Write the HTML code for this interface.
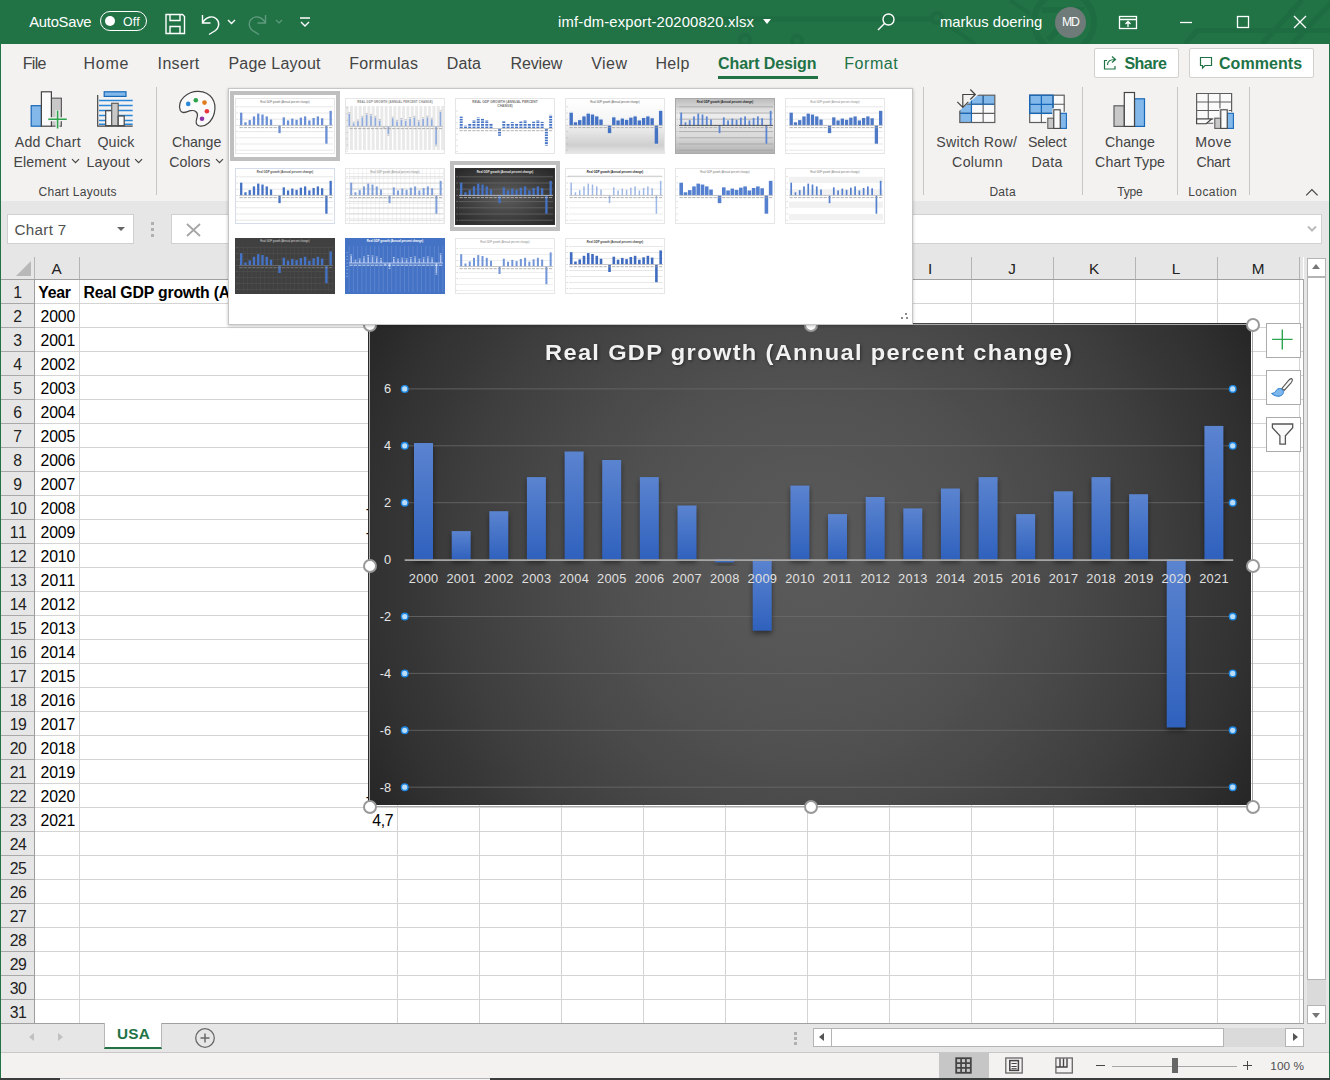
<!DOCTYPE html><html lang="en"><head><meta charset="utf-8"><title>imf-dm-export-20200820.xlsx - Excel</title><style>
*{box-sizing:border-box;margin:0;padding:0}
html,body{width:1330px;height:1080px;overflow:hidden;background:#fff}
body{font-family:"Liberation Sans",sans-serif;color:#222;position:relative}
.abs{position:absolute}
.t{position:absolute;white-space:nowrap;line-height:1}
#title{position:absolute;left:0;top:0;width:1330px;height:44px;background:#217346;color:#fff}
#tabs{position:absolute;left:0;top:44px;width:1330px;height:38px;background:#f3f2f1}
#ribbon{position:absolute;left:0;top:82px;width:1330px;height:119px;background:#f3f2f1}
#fbar{position:absolute;left:0;top:201px;width:1330px;height:56px;background:#e6e6e6}
#grid{position:absolute;left:1px;top:257px;width:1302px;height:767px;background:#fff;overflow:hidden}
.tab{position:absolute;top:10px;font-size:16.3px;color:#444;white-space:nowrap;line-height:18px;letter-spacing:-0.35px}
.rl{position:absolute;font-size:14.6px;color:#444;white-space:nowrap;line-height:20px;text-align:center;letter-spacing:-0.3px}
.gl{position:absolute;font-size:12.6px;color:#444;white-space:nowrap;line-height:14px;text-align:center;top:102px;letter-spacing:-0.2px}
.sep{position:absolute;top:5px;width:1px;height:108px;background:#c8c6c4}
.ch{position:absolute;top:0;height:23px;font-size:15.5px;line-height:23px;text-align:center;color:#222}
.rh{position:absolute;left:0;width:33px;height:24px;font-size:15.5px;line-height:25px;text-align:center;color:#222}
.cell{position:absolute;font-size:15.8px;line-height:25px;height:24px;color:#000;white-space:nowrap;letter-spacing:-0.2px}
</style></head><body>
<div id="title">
<svg class="abs" style="left:0;top:0" width="1330" height="44" viewBox="0 0 1330 44" fill="none" stroke="#1e6c41" stroke-width="5"><path d="M640 19H931"/><circle cx="937" cy="18" r="5" stroke-width="4"/><circle cx="797" cy="41" r="5" stroke-width="4"/><circle cx="745" cy="40" r="5" stroke-width="4"/><circle cx="1064" cy="22" r="30" stroke-width="6"/><path d="M1042 10H1078L1048 40" stroke-width="6"/><path d="M1330 30.500H1197L1185 44M1302 0L1262 44M1332 2L1292 44"/><path d="M945 23L975 44M1010 0L1030 14" stroke-width="4"/></svg>
<div class="abs" style="left:100px;top:11px;width:47px;height:20px;border:1px solid #fff;border-radius:10px"></div>
<div class="abs" style="left:105px;top:16px;width:10px;height:10px;border-radius:5px;background:#fff"></div>
<svg class="abs" style="left:160px;top:8px" width="160" height="30" viewBox="0 0 160 30" fill="none" stroke="#fff" stroke-width="1.4">
<path d="M6 6.5h16.5l2 2V25.5H6z"/><path d="M10 6.5v6h10v-6M10 25.5v-7h10v7"/>
<path d="M42.5 7v8h8" /><path d="M42.500 15c3-6 10-8 14-4s2 9-1 11.500l-6.500 4" />
<path d="M68 12l3.5 3.5 3.5-3.5" />
<g stroke="#5f9a7c"><path d="M105.500 7v8h-8" /><path d="M105.500 15c-3-6-10-8-14-4s-2 9 1 11.500l6.500 4" /><path d="M116 12l3 3 3-3" stroke-width="1.2"/></g>
<path d="M140 10h10M141 14l4 4 4-4" />
</svg>
<div class="abs" style="left:763px;top:19px;width:0;height:0;border-left:4px solid transparent;border-right:4px solid transparent;border-top:5px solid #fff"></div>
<svg class="abs" style="left:874px;top:10px" width="24" height="24" viewBox="0 0 24 24" fill="none" stroke="#fff" stroke-width="1.4"><circle cx="14.500" cy="9.500" r="5.500"/><path d="M10.500 13.500L4 20"/></svg>
<div class="abs" style="left:1055px;top:7px;width:31px;height:31px;border-radius:16px;background:#6e7b78"></div>
<svg class="abs" style="left:1115px;top:10px" width="200" height="24" viewBox="0 0 200 24" fill="none" stroke="#fff" stroke-width="1.3">
<rect x="4.500" y="6.500" width="17" height="12"/><path d="M4.500 9.500h17M13 17v-5M10.500 14l2.500-2.500 2.500 2.500"/>
<path d="M65 12.500h12"/>
<rect x="122.500" y="6.500" width="11" height="11"/>
<path d="M179 6l12 12M191 6l-12 12"/>
</svg>
</div>
<div id="tabs">
<div class="abs" style="left:718px;top:32px;width:100px;height:3px;background:#217346"></div>
<div class="abs" style="left:1094px;top:4px;width:85px;height:30px;background:#fff;border:1px solid #d2d0ce;border-radius:2px"></div>
<svg class="abs" style="left:1101px;top:10px" width="18" height="18" viewBox="0 0 18 18" fill="none" stroke="#217346" stroke-width="1.2"><path d="M6 6.500H3.500v8.500h10.500v-3"/><path d="M6.500 11c0-4 3-5.500 7.500-5.500M11 2.500l3.500 3-3.500 3"/></svg>
<div class="abs" style="left:1189px;top:4px;width:125px;height:30px;background:#fff;border:1px solid #d2d0ce;border-radius:2px"></div>
<svg class="abs" style="left:1197px;top:10px" width="18" height="18" viewBox="0 0 18 18" fill="none" stroke="#217346" stroke-width="1.2"><path d="M3.500 3.500h11v8h-6.500l-2.500 2.500v-2.500h-2z"/></svg>
</div>
<div id="ribbon">
<div class="sep" style="left:156px"></div>
<div class="sep" style="left:923px"></div>
<div class="sep" style="left:1082px"></div>
<div class="sep" style="left:1177px"></div>
<div class="sep" style="left:1249px"></div>
<svg class="abs" style="left:0;top:0" width="1330" height="119" viewBox="0 82 1330 119" fill="none">
<rect x="31.200" y="105.700" width="10.200" height="20.500" fill="#83b9ea" stroke="#1767b8" stroke-width="1.200"/>
<rect x="51.400" y="98.200" width="10" height="28" fill="#c8c8c8" stroke="#5e5e5e" stroke-width="1.200"/>
<rect x="41.400" y="91.800" width="10" height="34.400" fill="#fafafa" stroke="#444" stroke-width="1.200"/>
<path d="M57.600 110v18.500M48 119.200h19" stroke="#f3f2f1" stroke-width="4"/>
<path d="M57.600 110.500v18M48.300 119.200h18.500" stroke="#2da44e" stroke-width="1.600"/>
<line x1="99" y1="100.5" x2="132.700" y2="100.5" stroke="#2b88d8" stroke-width="1.500"/>
<line x1="99" y1="105.5" x2="132.700" y2="105.5" stroke="#2b88d8" stroke-width="1.500"/>
<line x1="99" y1="110.5" x2="132.700" y2="110.5" stroke="#2b88d8" stroke-width="1.500"/>
<line x1="99" y1="115.5" x2="132.700" y2="115.5" stroke="#2b88d8" stroke-width="1.500"/>
<line x1="99" y1="120.5" x2="132.700" y2="120.5" stroke="#2b88d8" stroke-width="1.500"/>
<line x1="99" y1="124.3" x2="132.700" y2="124.3" stroke="#2b88d8" stroke-width="1.500"/>
<rect x="104.200" y="91.800" width="21.800" height="4.600" fill="#83b9ea" stroke="#1767b8" stroke-width="1.200"/>
<rect x="105.700" y="110.700" width="6" height="15" fill="#fafafa" stroke="#444" stroke-width="1.200"/>
<rect x="111.700" y="103.300" width="6.500" height="22.400" fill="#c8c8c8" stroke="#5e5e5e" stroke-width="1.200"/>
<rect x="118.200" y="116" width="6" height="9.700" fill="#fafafa" stroke="#444" stroke-width="1.200"/>
<path d="M97.700 95v31.200h35" stroke="#444" stroke-width="1.200"/>
<path d="M180.300 110.500C176.500 100 188 91 198.500 91.300C211 91.700 217 102 214.300 113C212.300 121.500 205 127.300 199.500 126C194.500 124.800 196.300 120 197.300 116.500C198.300 112.500 195 109.700 190.500 110.700C186.500 111.600 182.500 114.500 180.300 110.500Z" fill="#fafafa" stroke="#444" stroke-width="1.200"/>
<circle cx="188.2" cy="103.9" r="2.300" fill="#2b88d8"/>
<circle cx="195.8" cy="100.2" r="2.300" fill="#2da44e"/>
<circle cx="204.5" cy="102.6" r="2.300" fill="#e07b1a"/>
<circle cx="206.9" cy="111.3" r="2.300" fill="#e8373e"/>
<circle cx="202" cy="118.8" r="2.300" fill="#8e33a8"/>
<rect x="959.8" y="95.2" width="35.01" height="27.299999999999997" fill="#fafafa"/>
<path d="M970.303 95.2H994.81V104.3H971.4699999999999V122.5H959.8V103.39Z" fill="#83b9ea"/>
<path d="M971.4699999999999 95.2V122.5M983.14 95.2V122.5M959.8 104.3H994.81M959.8 113.4H994.81" stroke="#5e5e5e" stroke-width="1.100"/>
<path d="M971.4699999999999 95.2V104.3H994.81M971.4699999999999 104.3V122.5M983.14 95.2V104.3M959.8 113.4H971.4699999999999" stroke="#1767b8" stroke-width="1.100"/>
<rect x="959.8" y="95.2" width="35.01" height="27.299999999999997" stroke="#5e5e5e" stroke-width="1.200"/>
<path d="M955.800 91.200H982.400L955.800 113.700Z" fill="#f3f2f1"/>
<path d="M962.800 107V94.500H975M970.300 89.500l5 5-5 5M957.300 101.800l5.500 5.500 5.500-5.500" stroke="#444" stroke-width="1.200"/>
<rect x="1029.7" y="95.2" width="34.51" height="27.299999999999997" fill="#fafafa"/>
<rect x="1029.7" y="95.2" width="23.34" height="18.2" fill="#83b9ea"/>
<path d="M1053.04 95.2V122.5M1041.3700000000001 113.4V122.5M1053.04 104.3H1064.71M1029.7 113.4H1064.71" stroke="#5e5e5e" stroke-width="1.100"/>
<rect x="1029.7" y="95.2" width="34.51" height="27.299999999999997" stroke="#5e5e5e" stroke-width="1.200"/>
<path d="M1041.3700000000001 95.2V113.4M1029.7 104.3H1053.04" stroke="#1767b8" stroke-width="1.200"/>
<rect x="1029.7" y="95.2" width="23.34" height="18.2" stroke="#1767b8" stroke-width="1.300"/>
<path d="M1046.3 130V116.700H1052.3V108.300H1061.7V111.800H1067.8999999999999V130Z" fill="#f3f2f1"/><rect x="1047.8" y="118.200" width="6" height="10.200" fill="#c8c8c8" stroke="#5e5e5e" stroke-width="1.100"/><rect x="1060.2" y="113.300" width="6.200" height="15.100" fill="#83b9ea" stroke="#1767b8" stroke-width="1.100"/><rect x="1053.8" y="109.800" width="6.400" height="18.600" fill="#fafafa" stroke="#444" stroke-width="1.100"/>
<rect x="1114" y="105.800" width="10.300" height="20.600" fill="#c8c8c8" stroke="#5e5e5e" stroke-width="1.200"/>
<rect x="1134.500" y="98.800" width="10" height="27.600" fill="#83b9ea" stroke="#1767b8" stroke-width="1.200"/>
<rect x="1124.300" y="92.500" width="10.200" height="33.900" fill="#fafafa" stroke="#444" stroke-width="1.200"/>
<path d="M1196.6 93.5H1231.61V123.25H1196.6Z" fill="#fafafa" stroke="#5e5e5e" stroke-width="1.200"/>
<path d="M1208.27 93.5V119.0M1219.9399999999998 93.5V119.0M1196.6 102.0H1231.61M1196.6 110.5H1231.61M1196.6 119.0H1231.61" stroke="#5e5e5e" stroke-width="1.100"/>
<path d="M1196.6 119.0H1211.6L1206.1 123.75H1196.6Z" fill="#fafafa" stroke="#444" stroke-width="1.200"/>
<path d="M1213.3 130V116.700H1219.3V108.300H1228.7V111.800H1234.8999999999999V130Z" fill="#f3f2f1"/><rect x="1214.8" y="118.200" width="6" height="10.200" fill="#c8c8c8" stroke="#5e5e5e" stroke-width="1.100"/><rect x="1227.2" y="113.300" width="6.200" height="15.100" fill="#83b9ea" stroke="#1767b8" stroke-width="1.100"/><rect x="1220.8" y="109.800" width="6.400" height="18.600" fill="#fafafa" stroke="#444" stroke-width="1.100"/>
<path d="M72.0 159.2l3.500 3.500 3.500-3.500" stroke="#444" stroke-width="1.200"/>
<path d="M135.1 159.2l3.500 3.500 3.500-3.500" stroke="#444" stroke-width="1.200"/>
<path d="M216.0 159.2l3.500 3.500 3.500-3.500" stroke="#444" stroke-width="1.200"/>
<path d="M1306.200 195.300l5.700-5.700 5.700 5.700" stroke="#444" stroke-width="1.200"/>
</svg>
</div>
<div class="abs" style="left:0;top:201px;width:1330px;height:7px;background:linear-gradient(#d0d0d0,#e6e6e6)"></div>
<div id="fbar">
<div class="abs" style="left:7px;top:13px;width:127px;height:30px;background:#fff;border:1px solid #d0d0d0"></div>
<div class="abs" style="left:117px;top:26px;width:0;height:0;border-left:4px solid transparent;border-right:4px solid transparent;border-top:4px solid #666"></div>
<div class="abs" style="left:151px;top:21px;width:3px;height:3px;background:#b0b0b0;box-shadow:0 6px #b0b0b0,0 12px #b0b0b0"></div>
<div class="abs" style="left:171px;top:13px;width:1151px;height:30px;background:#fff;border:1px solid #d0d0d0"></div>
<svg class="abs" style="left:185px;top:21px" width="18" height="16" viewBox="0 0 18 16" stroke="#a6a6a6" stroke-width="1.800" fill="none"><path d="M2 2l13 12M15 2L2 14"/></svg>
<svg class="abs" style="left:1306px;top:24px" width="12" height="8" viewBox="0 0 12 8" stroke="#bbb" stroke-width="2" fill="none"><path d="M2 1.500l4 4 4-4"/></svg>
</div>
<div id="grid">
<div class="abs" style="left:0;top:0;width:34px;height:767px;background:#e6e6e6;border-right:1px solid #9e9e9e"></div>
<div class="abs" style="left:0;top:0;width:1304px;height:23px;background:#e6e6e6;border-bottom:1px solid #a0a0a0"></div>
<div class="abs" style="left:15px;top:4px;width:0;height:0;border-left:15px solid transparent;border-bottom:15px solid #b8b8b8"></div>
<div class="abs" style="left:78px;top:0;width:1px;height:22px;background:#b4b4b4"></div>
<div class="abs" style="left:78px;top:23px;width:1px;height:744px;background:#d4d4d4"></div>
<div class="abs" style="left:396px;top:0;width:1px;height:22px;background:#b4b4b4"></div>
<div class="abs" style="left:396px;top:23px;width:1px;height:744px;background:#d4d4d4"></div>
<div class="abs" style="left:478px;top:0;width:1px;height:22px;background:#b4b4b4"></div>
<div class="abs" style="left:478px;top:23px;width:1px;height:744px;background:#d4d4d4"></div>
<div class="abs" style="left:560px;top:0;width:1px;height:22px;background:#b4b4b4"></div>
<div class="abs" style="left:560px;top:23px;width:1px;height:744px;background:#d4d4d4"></div>
<div class="abs" style="left:642px;top:0;width:1px;height:22px;background:#b4b4b4"></div>
<div class="abs" style="left:642px;top:23px;width:1px;height:744px;background:#d4d4d4"></div>
<div class="abs" style="left:724px;top:0;width:1px;height:22px;background:#b4b4b4"></div>
<div class="abs" style="left:724px;top:23px;width:1px;height:744px;background:#d4d4d4"></div>
<div class="abs" style="left:806px;top:0;width:1px;height:22px;background:#b4b4b4"></div>
<div class="abs" style="left:806px;top:23px;width:1px;height:744px;background:#d4d4d4"></div>
<div class="abs" style="left:888px;top:0;width:1px;height:22px;background:#b4b4b4"></div>
<div class="abs" style="left:888px;top:23px;width:1px;height:744px;background:#d4d4d4"></div>
<div class="abs" style="left:970px;top:0;width:1px;height:22px;background:#b4b4b4"></div>
<div class="abs" style="left:970px;top:23px;width:1px;height:744px;background:#d4d4d4"></div>
<div class="abs" style="left:1052px;top:0;width:1px;height:22px;background:#b4b4b4"></div>
<div class="abs" style="left:1052px;top:23px;width:1px;height:744px;background:#d4d4d4"></div>
<div class="abs" style="left:1134px;top:0;width:1px;height:22px;background:#b4b4b4"></div>
<div class="abs" style="left:1134px;top:23px;width:1px;height:744px;background:#d4d4d4"></div>
<div class="abs" style="left:1216px;top:0;width:1px;height:22px;background:#b4b4b4"></div>
<div class="abs" style="left:1216px;top:23px;width:1px;height:744px;background:#d4d4d4"></div>
<div class="abs" style="left:1298px;top:0;width:1px;height:22px;background:#b4b4b4"></div>
<div class="abs" style="left:1298px;top:23px;width:1px;height:744px;background:#d4d4d4"></div>
<div class="abs" style="left:33px;top:0;width:1px;height:22px;background:#b4b4b4"></div>
<div class="abs" style="left:0;top:46px;width:33px;height:1px;background:#a8a8a8"></div>
<div class="abs" style="left:34px;top:46px;width:1270px;height:1px;background:#d4d4d4"></div>
<div class="abs" style="left:0;top:70px;width:33px;height:1px;background:#a8a8a8"></div>
<div class="abs" style="left:34px;top:70px;width:1270px;height:1px;background:#d4d4d4"></div>
<div class="abs" style="left:0;top:94px;width:33px;height:1px;background:#a8a8a8"></div>
<div class="abs" style="left:34px;top:94px;width:1270px;height:1px;background:#d4d4d4"></div>
<div class="abs" style="left:0;top:118px;width:33px;height:1px;background:#a8a8a8"></div>
<div class="abs" style="left:34px;top:118px;width:1270px;height:1px;background:#d4d4d4"></div>
<div class="abs" style="left:0;top:142px;width:33px;height:1px;background:#a8a8a8"></div>
<div class="abs" style="left:34px;top:142px;width:1270px;height:1px;background:#d4d4d4"></div>
<div class="abs" style="left:0;top:166px;width:33px;height:1px;background:#a8a8a8"></div>
<div class="abs" style="left:34px;top:166px;width:1270px;height:1px;background:#d4d4d4"></div>
<div class="abs" style="left:0;top:190px;width:33px;height:1px;background:#a8a8a8"></div>
<div class="abs" style="left:34px;top:190px;width:1270px;height:1px;background:#d4d4d4"></div>
<div class="abs" style="left:0;top:214px;width:33px;height:1px;background:#a8a8a8"></div>
<div class="abs" style="left:34px;top:214px;width:1270px;height:1px;background:#d4d4d4"></div>
<div class="abs" style="left:0;top:238px;width:33px;height:1px;background:#a8a8a8"></div>
<div class="abs" style="left:34px;top:238px;width:1270px;height:1px;background:#d4d4d4"></div>
<div class="abs" style="left:0;top:262px;width:33px;height:1px;background:#a8a8a8"></div>
<div class="abs" style="left:34px;top:262px;width:1270px;height:1px;background:#d4d4d4"></div>
<div class="abs" style="left:0;top:286px;width:33px;height:1px;background:#a8a8a8"></div>
<div class="abs" style="left:34px;top:286px;width:1270px;height:1px;background:#d4d4d4"></div>
<div class="abs" style="left:0;top:310px;width:33px;height:1px;background:#a8a8a8"></div>
<div class="abs" style="left:34px;top:310px;width:1270px;height:1px;background:#d4d4d4"></div>
<div class="abs" style="left:0;top:334px;width:33px;height:1px;background:#a8a8a8"></div>
<div class="abs" style="left:34px;top:334px;width:1270px;height:1px;background:#d4d4d4"></div>
<div class="abs" style="left:0;top:358px;width:33px;height:1px;background:#a8a8a8"></div>
<div class="abs" style="left:34px;top:358px;width:1270px;height:1px;background:#d4d4d4"></div>
<div class="abs" style="left:0;top:382px;width:33px;height:1px;background:#a8a8a8"></div>
<div class="abs" style="left:34px;top:382px;width:1270px;height:1px;background:#d4d4d4"></div>
<div class="abs" style="left:0;top:406px;width:33px;height:1px;background:#a8a8a8"></div>
<div class="abs" style="left:34px;top:406px;width:1270px;height:1px;background:#d4d4d4"></div>
<div class="abs" style="left:0;top:430px;width:33px;height:1px;background:#a8a8a8"></div>
<div class="abs" style="left:34px;top:430px;width:1270px;height:1px;background:#d4d4d4"></div>
<div class="abs" style="left:0;top:454px;width:33px;height:1px;background:#a8a8a8"></div>
<div class="abs" style="left:34px;top:454px;width:1270px;height:1px;background:#d4d4d4"></div>
<div class="abs" style="left:0;top:478px;width:33px;height:1px;background:#a8a8a8"></div>
<div class="abs" style="left:34px;top:478px;width:1270px;height:1px;background:#d4d4d4"></div>
<div class="abs" style="left:0;top:502px;width:33px;height:1px;background:#a8a8a8"></div>
<div class="abs" style="left:34px;top:502px;width:1270px;height:1px;background:#d4d4d4"></div>
<div class="abs" style="left:0;top:526px;width:33px;height:1px;background:#a8a8a8"></div>
<div class="abs" style="left:34px;top:526px;width:1270px;height:1px;background:#d4d4d4"></div>
<div class="abs" style="left:0;top:550px;width:33px;height:1px;background:#a8a8a8"></div>
<div class="abs" style="left:34px;top:550px;width:1270px;height:1px;background:#d4d4d4"></div>
<div class="abs" style="left:0;top:574px;width:33px;height:1px;background:#a8a8a8"></div>
<div class="abs" style="left:34px;top:574px;width:1270px;height:1px;background:#d4d4d4"></div>
<div class="abs" style="left:0;top:598px;width:33px;height:1px;background:#a8a8a8"></div>
<div class="abs" style="left:34px;top:598px;width:1270px;height:1px;background:#d4d4d4"></div>
<div class="abs" style="left:0;top:622px;width:33px;height:1px;background:#a8a8a8"></div>
<div class="abs" style="left:34px;top:622px;width:1270px;height:1px;background:#d4d4d4"></div>
<div class="abs" style="left:0;top:646px;width:33px;height:1px;background:#a8a8a8"></div>
<div class="abs" style="left:34px;top:646px;width:1270px;height:1px;background:#d4d4d4"></div>
<div class="abs" style="left:0;top:670px;width:33px;height:1px;background:#a8a8a8"></div>
<div class="abs" style="left:34px;top:670px;width:1270px;height:1px;background:#d4d4d4"></div>
<div class="abs" style="left:0;top:694px;width:33px;height:1px;background:#a8a8a8"></div>
<div class="abs" style="left:34px;top:694px;width:1270px;height:1px;background:#d4d4d4"></div>
<div class="abs" style="left:0;top:718px;width:33px;height:1px;background:#a8a8a8"></div>
<div class="abs" style="left:34px;top:718px;width:1270px;height:1px;background:#d4d4d4"></div>
<div class="abs" style="left:0;top:742px;width:33px;height:1px;background:#a8a8a8"></div>
<div class="abs" style="left:34px;top:742px;width:1270px;height:1px;background:#d4d4d4"></div>
<div class="abs" style="left:0;top:766px;width:33px;height:1px;background:#a8a8a8"></div>
<div class="abs" style="left:34px;top:766px;width:1270px;height:1px;background:#d4d4d4"></div>
</div>
<div class="abs" style="left:1304px;top:257px;width:26px;height:767px;background:#e6e6e6"></div>
<div class="abs" style="left:1303px;top:279px;width:1px;height:745px;background:#a6a6a6"></div>
<div class="abs" style="left:1px;top:1023px;width:1303px;height:1px;background:#a0a0a0"></div>
<div class="abs" style="left:1307px;top:258px;width:19px;height:19px;background:#fff;border:1px solid #b4b4b4"></div>
<div class="abs" style="left:1307px;top:277px;width:19px;height:703px;background:#fff;border:1px solid #b4b4b4"></div>
<div class="abs" style="left:1307px;top:980px;width:19px;height:25px;background:#dadada"></div>
<div class="abs" style="left:1307px;top:1005px;width:19px;height:19px;background:#fff;border:1px solid #b4b4b4"></div>
<div class="abs" style="left:1312px;top:264px;width:0;height:0;border-left:4.5px solid transparent;border-right:4.5px solid transparent;border-bottom:5px solid #777"></div>
<div class="abs" style="left:1312px;top:1013px;width:0;height:0;border-left:4.5px solid transparent;border-right:4.5px solid transparent;border-top:5px solid #777"></div>
<div class="abs" style="left:0;top:1024px;width:1330px;height:28px;background:#e6e6e6"></div>
<div class="abs" style="left:0;top:1052px;width:1330px;height:28px;background:#f3f2f1;border-top:1px solid #c8c8c8"></div>
<div class="abs" style="left:104px;top:1023px;width:58px;height:26px;background:#fff;border-left:1px solid #b8b8b8;border-right:1px solid #b8b8b8;border-bottom:2px solid #217346"></div>
<div class="abs" style="left:29px;top:1033px;width:0;height:0;border-top:4.5px solid transparent;border-bottom:4.5px solid transparent;border-right:5.5px solid #c0c0c0"></div>
<div class="abs" style="left:58px;top:1033px;width:0;height:0;border-top:4.5px solid transparent;border-bottom:4.5px solid transparent;border-left:5.5px solid #c0c0c0"></div>
<svg class="abs" style="left:194px;top:1027px" width="22" height="22" viewBox="0 0 22 22" fill="none" stroke="#6a6a6a" stroke-width="1.3"><circle cx="11" cy="11" r="9.300"/><path d="M11 6.500v9M6.500 11h9" stroke-width="1.500"/></svg>
<div class="abs" style="left:794px;top:1032px;width:3px;height:3px;background:#b0b0b0;box-shadow:0 5px #b0b0b0,0 10px #b0b0b0"></div>
<div class="abs" style="left:813px;top:1028px;width:491px;height:19px;background:#dadada"></div>
<div class="abs" style="left:813px;top:1028px;width:19px;height:19px;background:#fff;border:1px solid #b4b4b4"></div>
<div class="abs" style="left:819px;top:1033px;width:0;height:0;border-top:4.5px solid transparent;border-bottom:4.5px solid transparent;border-right:5px solid #555"></div>
<div class="abs" style="left:831px;top:1028px;width:393px;height:19px;background:#fff;border:1px solid #b4b4b4"></div>
<div class="abs" style="left:1285px;top:1028px;width:19px;height:19px;background:#fff;border:1px solid #b4b4b4"></div>
<div class="abs" style="left:1293px;top:1033px;width:0;height:0;border-top:4.5px solid transparent;border-bottom:4.5px solid transparent;border-left:5px solid #555"></div>
<div class="abs" style="left:939px;top:1053px;width:50px;height:25px;background:#c6c6c6"></div>
<svg class="abs" style="left:950px;top:1053px" width="140" height="25" viewBox="950 1053 140 25" fill="none" stroke="#444" stroke-width="1.3">
<rect x="956.200" y="1058.200" width="14.600" height="14.600" stroke-width="1.800"/><path d="M956 1063.200h15M956 1067.900h15M961.100 1058v15M965.900 1058v15" stroke-width="1.700"/>
<rect x="1005.800" y="1058" width="16.400" height="15" stroke="#666"/><rect x="1009.800" y="1060.600" width="8.600" height="9.800" stroke-width="1.500"/><path d="M1011.500 1063.500h5.200M1011.500 1066.500h5.200M1011.500 1068.700h5.200" stroke-width="1"/>
<rect x="1055.900" y="1058" width="16.400" height="15" stroke="#666"/><path d="M1056 1067h11V1058.500M1060 1058.500v8M1063.500 1058.500v8" stroke-width="1.400"/>
</svg>
<div class="abs" style="left:1096px;top:1065px;width:9px;height:1px;background:#444"></div>
<div class="abs" style="left:1112px;top:1066px;width:125px;height:1px;background:#a6a6a6"></div>
<div class="abs" style="left:1172px;top:1058px;width:6px;height:15px;background:#666"></div>
<div class="abs" style="left:1243px;top:1065px;width:9px;height:1px;background:#444"></div><div class="abs" style="left:1247px;top:1061px;width:1px;height:9px;background:#444"></div>
<div class="abs" style="left:0;top:1078px;width:1330px;height:2px;background:#3a3d3b"></div>
<div class="abs" style="left:60px;top:1078px;width:430px;height:1px;background:#b4b4b4"></div><div class="abs" style="left:60px;top:1079px;width:430px;height:1px;background:#f4f4f4"></div>
<div class="t" style="left:51.47px;top:260px;line-height:17px;font-size:15.3px;color:#222;letter-spacing:0.000px;">A</div>
<div class="t" style="left:233.01px;top:260px;line-height:17px;font-size:15.3px;color:#222;letter-spacing:0.000px;">B</div>
<div class="t" style="left:432.59px;top:260px;line-height:17px;font-size:15.3px;color:#222;letter-spacing:0.000px;">C</div>
<div class="t" style="left:514.59px;top:260px;line-height:17px;font-size:15.3px;color:#222;letter-spacing:0.000px;">D</div>
<div class="t" style="left:597.01px;top:260px;line-height:17px;font-size:15.3px;color:#222;letter-spacing:0.000px;">E</div>
<div class="t" style="left:679.43px;top:260px;line-height:17px;font-size:15.3px;color:#222;letter-spacing:0.000px;">F</div>
<div class="t" style="left:760.13px;top:260px;line-height:17px;font-size:15.3px;color:#222;letter-spacing:0.000px;">G</div>
<div class="t" style="left:842.59px;top:260px;line-height:17px;font-size:15.3px;color:#222;letter-spacing:0.000px;">H</div>
<div class="t" style="left:927.96px;top:260px;line-height:17px;font-size:15.3px;color:#222;letter-spacing:0.000px;">I</div>
<div class="t" style="left:1008.27px;top:260px;line-height:17px;font-size:15.3px;color:#222;letter-spacing:0.000px;">J</div>
<div class="t" style="left:1089.01px;top:260px;line-height:17px;font-size:15.3px;color:#222;letter-spacing:0.000px;">K</div>
<div class="t" style="left:1171.85px;top:260px;line-height:17px;font-size:15.3px;color:#222;letter-spacing:0.000px;">L</div>
<div class="t" style="left:1251.71px;top:260px;line-height:17px;font-size:15.3px;color:#222;letter-spacing:0.000px;">M</div>
<div class="t" style="left:13.32px;top:284px;line-height:17px;font-size:15.8px;color:#222;letter-spacing:0.000px;">1</div>
<div class="t" style="left:13.32px;top:308px;line-height:17px;font-size:15.8px;color:#222;letter-spacing:0.000px;">2</div>
<div class="t" style="left:13.32px;top:332px;line-height:17px;font-size:15.8px;color:#222;letter-spacing:0.000px;">3</div>
<div class="t" style="left:13.32px;top:356px;line-height:17px;font-size:15.8px;color:#222;letter-spacing:0.000px;">4</div>
<div class="t" style="left:13.32px;top:380px;line-height:17px;font-size:15.8px;color:#222;letter-spacing:0.000px;">5</div>
<div class="t" style="left:13.32px;top:404px;line-height:17px;font-size:15.8px;color:#222;letter-spacing:0.000px;">6</div>
<div class="t" style="left:13.32px;top:428px;line-height:17px;font-size:15.8px;color:#222;letter-spacing:0.000px;">7</div>
<div class="t" style="left:13.32px;top:452px;line-height:17px;font-size:15.8px;color:#222;letter-spacing:0.000px;">8</div>
<div class="t" style="left:13.32px;top:476px;line-height:17px;font-size:15.8px;color:#222;letter-spacing:0.000px;">9</div>
<div class="t" style="left:9.80px;top:500px;line-height:17px;font-size:15.8px;color:#222;letter-spacing:-0.638px;">10</div>
<div class="t" style="left:9.80px;top:524px;line-height:17px;font-size:15.8px;color:#222;letter-spacing:0.468px;">11</div>
<div class="t" style="left:9.80px;top:548px;line-height:17px;font-size:15.8px;color:#222;letter-spacing:-0.638px;">12</div>
<div class="t" style="left:9.80px;top:572px;line-height:17px;font-size:15.8px;color:#222;letter-spacing:-0.638px;">13</div>
<div class="t" style="left:9.80px;top:596px;line-height:17px;font-size:15.8px;color:#222;letter-spacing:-0.638px;">14</div>
<div class="t" style="left:9.80px;top:620px;line-height:17px;font-size:15.8px;color:#222;letter-spacing:-0.638px;">15</div>
<div class="t" style="left:9.80px;top:644px;line-height:17px;font-size:15.8px;color:#222;letter-spacing:-0.638px;">16</div>
<div class="t" style="left:9.80px;top:668px;line-height:17px;font-size:15.8px;color:#222;letter-spacing:-0.638px;">17</div>
<div class="t" style="left:9.80px;top:692px;line-height:17px;font-size:15.8px;color:#222;letter-spacing:-0.638px;">18</div>
<div class="t" style="left:9.80px;top:716px;line-height:17px;font-size:15.8px;color:#222;letter-spacing:-0.638px;">19</div>
<div class="t" style="left:9.80px;top:740px;line-height:17px;font-size:15.8px;color:#222;letter-spacing:-0.638px;">20</div>
<div class="t" style="left:9.80px;top:764px;line-height:17px;font-size:15.8px;color:#222;letter-spacing:-0.638px;">21</div>
<div class="t" style="left:9.80px;top:788px;line-height:17px;font-size:15.8px;color:#222;letter-spacing:-0.638px;">22</div>
<div class="t" style="left:9.80px;top:812px;line-height:17px;font-size:15.8px;color:#222;letter-spacing:-0.638px;">23</div>
<div class="t" style="left:9.80px;top:836px;line-height:17px;font-size:15.8px;color:#222;letter-spacing:-0.638px;">24</div>
<div class="t" style="left:9.80px;top:860px;line-height:17px;font-size:15.8px;color:#222;letter-spacing:-0.638px;">25</div>
<div class="t" style="left:9.80px;top:884px;line-height:17px;font-size:15.8px;color:#222;letter-spacing:-0.638px;">26</div>
<div class="t" style="left:9.80px;top:908px;line-height:17px;font-size:15.8px;color:#222;letter-spacing:-0.638px;">27</div>
<div class="t" style="left:9.80px;top:932px;line-height:17px;font-size:15.8px;color:#222;letter-spacing:-0.638px;">28</div>
<div class="t" style="left:9.80px;top:956px;line-height:17px;font-size:15.8px;color:#222;letter-spacing:-0.638px;">29</div>
<div class="t" style="left:9.80px;top:980px;line-height:17px;font-size:15.8px;color:#222;letter-spacing:-0.638px;">30</div>
<div class="t" style="left:9.80px;top:1004px;line-height:17px;font-size:15.8px;color:#222;letter-spacing:-0.638px;">31</div>
<div class="t" style="left:38.30px;top:284px;line-height:17px;font-size:15.8px;font-weight:bold;color:#000;letter-spacing:-0.239px;">Year</div>
<div class="t" style="left:83.50px;top:284px;line-height:17px;font-size:15.8px;font-weight:bold;color:#000;letter-spacing:-0.182px;">Real GDP growth (Annual percent change)</div>
<div class="t" style="left:40.60px;top:308px;line-height:17px;font-size:15.8px;color:#000;letter-spacing:-0.185px;">2000</div>
<div class="t" style="left:40.60px;top:332px;line-height:17px;font-size:15.8px;color:#000;letter-spacing:-0.185px;">2001</div>
<div class="t" style="left:40.60px;top:356px;line-height:17px;font-size:15.8px;color:#000;letter-spacing:-0.185px;">2002</div>
<div class="t" style="left:40.60px;top:380px;line-height:17px;font-size:15.8px;color:#000;letter-spacing:-0.185px;">2003</div>
<div class="t" style="left:40.60px;top:404px;line-height:17px;font-size:15.8px;color:#000;letter-spacing:-0.185px;">2004</div>
<div class="t" style="left:40.60px;top:428px;line-height:17px;font-size:15.8px;color:#000;letter-spacing:-0.185px;">2005</div>
<div class="t" style="left:40.60px;top:452px;line-height:17px;font-size:15.8px;color:#000;letter-spacing:-0.185px;">2006</div>
<div class="t" style="left:40.60px;top:476px;line-height:17px;font-size:15.8px;color:#000;letter-spacing:-0.185px;">2007</div>
<div class="t" style="left:40.60px;top:500px;line-height:17px;font-size:15.8px;color:#000;letter-spacing:-0.185px;">2008</div>
<div class="t" style="left:40.60px;top:524px;line-height:17px;font-size:15.8px;color:#000;letter-spacing:-0.185px;">2009</div>
<div class="t" style="left:40.60px;top:548px;line-height:17px;font-size:15.8px;color:#000;letter-spacing:-0.185px;">2010</div>
<div class="t" style="left:40.60px;top:572px;line-height:17px;font-size:15.8px;color:#000;letter-spacing:0.210px;">2011</div>
<div class="t" style="left:40.60px;top:596px;line-height:17px;font-size:15.8px;color:#000;letter-spacing:-0.185px;">2012</div>
<div class="t" style="left:40.60px;top:620px;line-height:17px;font-size:15.8px;color:#000;letter-spacing:-0.185px;">2013</div>
<div class="t" style="left:40.60px;top:644px;line-height:17px;font-size:15.8px;color:#000;letter-spacing:-0.185px;">2014</div>
<div class="t" style="left:40.60px;top:668px;line-height:17px;font-size:15.8px;color:#000;letter-spacing:-0.185px;">2015</div>
<div class="t" style="left:40.60px;top:692px;line-height:17px;font-size:15.8px;color:#000;letter-spacing:-0.185px;">2016</div>
<div class="t" style="left:40.60px;top:716px;line-height:17px;font-size:15.8px;color:#000;letter-spacing:-0.185px;">2017</div>
<div class="t" style="left:40.60px;top:740px;line-height:17px;font-size:15.8px;color:#000;letter-spacing:-0.185px;">2018</div>
<div class="t" style="left:40.60px;top:764px;line-height:17px;font-size:15.8px;color:#000;letter-spacing:-0.185px;">2019</div>
<div class="t" style="left:40.60px;top:788px;line-height:17px;font-size:15.8px;color:#000;letter-spacing:-0.185px;">2020</div>
<div class="t" style="left:40.60px;top:812px;line-height:17px;font-size:15.8px;color:#000;letter-spacing:-0.185px;">2021</div>
<div class="t" style="left:372.20px;top:812px;line-height:17px;font-size:15.8px;color:#000;letter-spacing:-0.331px;">4,7</div>
<div class="t" style="left:300px;width:93.7px;text-align:right;top:308px;line-height:17px;font-size:15.8px;color:#000;letter-spacing:0.2px">4,1</div>
<div class="t" style="left:300px;width:93.7px;text-align:right;top:332px;line-height:17px;font-size:15.8px;color:#000;letter-spacing:0.2px">1</div>
<div class="t" style="left:300px;width:93.7px;text-align:right;top:356px;line-height:17px;font-size:15.8px;color:#000;letter-spacing:0.2px">1,7</div>
<div class="t" style="left:300px;width:93.7px;text-align:right;top:380px;line-height:17px;font-size:15.8px;color:#000;letter-spacing:0.2px">2,9</div>
<div class="t" style="left:300px;width:93.7px;text-align:right;top:404px;line-height:17px;font-size:15.8px;color:#000;letter-spacing:0.2px">3,8</div>
<div class="t" style="left:300px;width:93.7px;text-align:right;top:428px;line-height:17px;font-size:15.8px;color:#000;letter-spacing:0.2px">3,5</div>
<div class="t" style="left:300px;width:93.7px;text-align:right;top:452px;line-height:17px;font-size:15.8px;color:#000;letter-spacing:0.2px">2,9</div>
<div class="t" style="left:300px;width:93.7px;text-align:right;top:476px;line-height:17px;font-size:15.8px;color:#000;letter-spacing:0.2px">1,9</div>
<div class="t" style="left:300px;width:93.7px;text-align:right;top:500px;line-height:17px;font-size:15.8px;color:#000;letter-spacing:0.2px">-0,1</div>
<div class="t" style="left:300px;width:93.7px;text-align:right;top:524px;line-height:17px;font-size:15.8px;color:#000;letter-spacing:0.2px">-2,5</div>
<div class="t" style="left:300px;width:93.7px;text-align:right;top:548px;line-height:17px;font-size:15.8px;color:#000;letter-spacing:0.2px">2,6</div>
<div class="t" style="left:300px;width:93.7px;text-align:right;top:572px;line-height:17px;font-size:15.8px;color:#000;letter-spacing:0.2px">1,6</div>
<div class="t" style="left:300px;width:93.7px;text-align:right;top:596px;line-height:17px;font-size:15.8px;color:#000;letter-spacing:0.2px">2,2</div>
<div class="t" style="left:300px;width:93.7px;text-align:right;top:620px;line-height:17px;font-size:15.8px;color:#000;letter-spacing:0.2px">1,8</div>
<div class="t" style="left:300px;width:93.7px;text-align:right;top:644px;line-height:17px;font-size:15.8px;color:#000;letter-spacing:0.2px">2,5</div>
<div class="t" style="left:300px;width:93.7px;text-align:right;top:668px;line-height:17px;font-size:15.8px;color:#000;letter-spacing:0.2px">2,9</div>
<div class="t" style="left:300px;width:93.7px;text-align:right;top:692px;line-height:17px;font-size:15.8px;color:#000;letter-spacing:0.2px">1,6</div>
<div class="t" style="left:300px;width:93.7px;text-align:right;top:716px;line-height:17px;font-size:15.8px;color:#000;letter-spacing:0.2px">2,4</div>
<div class="t" style="left:300px;width:93.7px;text-align:right;top:740px;line-height:17px;font-size:15.8px;color:#000;letter-spacing:0.2px">2,9</div>
<div class="t" style="left:300px;width:93.7px;text-align:right;top:764px;line-height:17px;font-size:15.8px;color:#000;letter-spacing:0.2px">2,3</div>
<div class="t" style="left:300px;width:93.7px;text-align:right;top:788px;line-height:17px;font-size:15.8px;color:#000;letter-spacing:0.2px">-5,9</div>
<div class="t" style="left:29.20px;top:14px;line-height:16px;font-size:14.8px;color:#fff;letter-spacing:-0.251px;">AutoSave</div>
<div class="t" style="left:123.00px;top:15px;line-height:14px;font-size:12.3px;color:#fff;letter-spacing:0.282px;">Off</div>
<div class="t" style="left:558.10px;top:14px;line-height:16px;font-size:14.8px;color:#fff;letter-spacing:0.159px;">imf-dm-export-20200820.xlsx</div>
<div class="t" style="left:940.00px;top:14px;line-height:16px;font-size:14.8px;color:#fff;letter-spacing:0.025px;">markus doering</div>
<div class="t" style="left:1062.00px;top:15px;line-height:14px;font-size:12.3px;color:#fff;letter-spacing:-1.127px;">MD</div>
<div class="t" style="left:22.70px;top:55px;line-height:17px;font-size:16px;color:#444;letter-spacing:-0.687px;">File</div>
<div class="t" style="left:83.50px;top:55px;line-height:17px;font-size:16px;color:#444;letter-spacing:0.760px;">Home</div>
<div class="t" style="left:157.60px;top:55px;line-height:17px;font-size:16px;color:#444;letter-spacing:0.340px;">Insert</div>
<div class="t" style="left:228.40px;top:55px;line-height:17px;font-size:16px;color:#444;letter-spacing:0.226px;">Page Layout</div>
<div class="t" style="left:349.20px;top:55px;line-height:17px;font-size:16px;color:#444;letter-spacing:0.297px;">Formulas</div>
<div class="t" style="left:446.70px;top:55px;line-height:17px;font-size:16px;color:#444;letter-spacing:0.153px;">Data</div>
<div class="t" style="left:510.50px;top:55px;line-height:17px;font-size:16px;color:#444;letter-spacing:-0.156px;">Review</div>
<div class="t" style="left:591.30px;top:55px;line-height:17px;font-size:16px;color:#444;letter-spacing:0.433px;">View</div>
<div class="t" style="left:655.40px;top:55px;line-height:17px;font-size:16px;color:#444;letter-spacing:0.373px;">Help</div>
<div class="t" style="left:718.10px;top:55px;line-height:17px;font-size:16px;font-weight:bold;color:#217346;letter-spacing:-0.100px;">Chart Design</div>
<div class="t" style="left:844.30px;top:55px;line-height:17px;font-size:16px;color:#217346;letter-spacing:0.552px;">Format</div>
<div class="t" style="left:1124.40px;top:55px;line-height:17px;font-size:16px;font-weight:bold;color:#217346;letter-spacing:-0.520px;">Share</div>
<div class="t" style="left:1219.00px;top:55px;line-height:17px;font-size:16px;font-weight:bold;color:#217346;letter-spacing:0.069px;">Comments</div>
<div class="t" style="left:14.70px;top:134px;line-height:16px;font-size:14.2px;color:#444;letter-spacing:0.266px;">Add Chart</div>
<div class="t" style="left:13.50px;top:154px;line-height:16px;font-size:14.2px;color:#444;letter-spacing:0.098px;">Element</div>
<div class="t" style="left:97.40px;top:134px;line-height:16px;font-size:14.2px;color:#444;letter-spacing:0.162px;">Quick</div>
<div class="t" style="left:86.50px;top:154px;line-height:16px;font-size:14.2px;color:#444;letter-spacing:0.106px;">Layout</div>
<div class="t" style="left:172.00px;top:134px;line-height:16px;font-size:14.2px;color:#444;letter-spacing:-0.074px;">Change</div>
<div class="t" style="left:169.20px;top:154px;line-height:16px;font-size:14.2px;color:#444;letter-spacing:0.052px;">Colors</div>
<div class="t" style="left:936.30px;top:134px;line-height:16px;font-size:14.2px;color:#444;letter-spacing:0.263px;">Switch Row/</div>
<div class="t" style="left:952.10px;top:154px;line-height:16px;font-size:14.2px;color:#444;letter-spacing:0.316px;">Column</div>
<div class="t" style="left:1027.90px;top:134px;line-height:16px;font-size:14.2px;color:#444;letter-spacing:-0.135px;">Select</div>
<div class="t" style="left:1031.60px;top:154px;line-height:16px;font-size:14.2px;color:#444;letter-spacing:0.256px;">Data</div>
<div class="t" style="left:1105.00px;top:134px;line-height:16px;font-size:14.2px;color:#444;letter-spacing:0.026px;">Change</div>
<div class="t" style="left:1095.10px;top:154px;line-height:16px;font-size:14.2px;color:#444;letter-spacing:0.086px;">Chart Type</div>
<div class="t" style="left:1195.30px;top:134px;line-height:16px;font-size:14.2px;color:#444;letter-spacing:0.427px;">Move</div>
<div class="t" style="left:1196.50px;top:154px;line-height:16px;font-size:14.2px;color:#444;letter-spacing:-0.280px;">Chart</div>
<div class="t" style="left:38.50px;top:185px;line-height:14px;font-size:12px;color:#444;letter-spacing:0.275px;">Chart Layouts</div>
<div class="t" style="left:989.40px;top:185px;line-height:14px;font-size:12px;color:#444;letter-spacing:0.273px;">Data</div>
<div class="t" style="left:1117.30px;top:185px;line-height:14px;font-size:12px;color:#444;letter-spacing:-0.247px;">Type</div>
<div class="t" style="left:1188.20px;top:185px;line-height:14px;font-size:12px;color:#444;letter-spacing:0.434px;">Location</div>
<div class="t" style="left:14.60px;top:221px;line-height:17px;font-size:15.2px;color:#505050;letter-spacing:0.291px;">Chart 7</div>
<div class="t" style="left:116.90px;top:1025px;line-height:17px;font-size:15.3px;font-weight:bold;color:#217346;letter-spacing:0.309px;">USA</div>
<div class="t" style="left:1270.30px;top:1059px;line-height:14px;font-size:11.8px;color:#505050;letter-spacing:0.062px;">100 %</div>
<div class="abs" style="left:368px;top:323px;width:883px;height:482px;background:radial-gradient(circle 503px at 50% 50%,#595959 0%,#595959 5%,#585858 10%,#575757 15%,#565656 20%,#545454 25%,#535353 30%,#515151 35%,#4f4f4f 40%,#4c4c4c 45%,#4a4a4a 50%,#474747 55%,#444444 60%,#414141 65%,#3e3e3e 70%,#3a3a3a 75%,#363636 80%,#333333 85%,#2f2f2f 90%,#2a2a2a 95%,#262626 100%)"></div>
<div class="abs" style="left:369px;top:324px;width:884px;height:483px;border:1px solid #a8a8a8"></div>
<svg class="abs" style="left:368px;top:323px" width="883" height="482" viewBox="368 323 883 482" font-family="Liberation Sans, sans-serif">
<defs><linearGradient id="bg" x1="0" y1="0" x2="0" y2="1"><stop offset="0" stop-color="#5b84d0"/><stop offset="1" stop-color="#2f61bd"/></linearGradient><filter id="sh" x="-30%" y="-10%" width="160%" height="130%"><feGaussianBlur stdDeviation="2.500"/></filter></defs>
<line x1="404.7" y1="388.9" x2="1232.7" y2="388.9" stroke="#6a6a6a" stroke-width="1" opacity="0.8"/>
<text x="391.2" y="393.3" font-size="12.8" fill="#e6e6e6" text-anchor="end">6</text>
<circle cx="404.7" cy="388.9" r="3.300" fill="#b9dcf8" stroke="#1e88e5" stroke-width="1.400"/>
<circle cx="1232.7" cy="388.9" r="3.300" fill="#b9dcf8" stroke="#1e88e5" stroke-width="1.400"/>
<line x1="404.7" y1="445.8" x2="1232.7" y2="445.8" stroke="#6a6a6a" stroke-width="1" opacity="0.8"/>
<text x="391.2" y="450.2" font-size="12.8" fill="#e6e6e6" text-anchor="end">4</text>
<circle cx="404.7" cy="445.8" r="3.300" fill="#b9dcf8" stroke="#1e88e5" stroke-width="1.400"/>
<circle cx="1232.7" cy="445.8" r="3.300" fill="#b9dcf8" stroke="#1e88e5" stroke-width="1.400"/>
<line x1="404.7" y1="502.7" x2="1232.7" y2="502.7" stroke="#6a6a6a" stroke-width="1" opacity="0.8"/>
<text x="391.2" y="507.1" font-size="12.8" fill="#e6e6e6" text-anchor="end">2</text>
<circle cx="404.7" cy="502.7" r="3.300" fill="#b9dcf8" stroke="#1e88e5" stroke-width="1.400"/>
<circle cx="1232.7" cy="502.7" r="3.300" fill="#b9dcf8" stroke="#1e88e5" stroke-width="1.400"/>
<line x1="404.7" y1="616.5" x2="1232.7" y2="616.5" stroke="#6a6a6a" stroke-width="1" opacity="0.8"/>
<text x="391.2" y="620.9" font-size="12.8" fill="#e6e6e6" text-anchor="end">-2</text>
<circle cx="404.7" cy="616.5" r="3.300" fill="#b9dcf8" stroke="#1e88e5" stroke-width="1.400"/>
<circle cx="1232.7" cy="616.5" r="3.300" fill="#b9dcf8" stroke="#1e88e5" stroke-width="1.400"/>
<line x1="404.7" y1="673.4" x2="1232.7" y2="673.4" stroke="#6a6a6a" stroke-width="1" opacity="0.8"/>
<text x="391.2" y="677.8" font-size="12.8" fill="#e6e6e6" text-anchor="end">-4</text>
<circle cx="404.7" cy="673.4" r="3.300" fill="#b9dcf8" stroke="#1e88e5" stroke-width="1.400"/>
<circle cx="1232.7" cy="673.4" r="3.300" fill="#b9dcf8" stroke="#1e88e5" stroke-width="1.400"/>
<line x1="404.7" y1="730.3" x2="1232.7" y2="730.3" stroke="#6a6a6a" stroke-width="1" opacity="0.8"/>
<text x="391.2" y="734.7" font-size="12.8" fill="#e6e6e6" text-anchor="end">-6</text>
<circle cx="404.7" cy="730.3" r="3.300" fill="#b9dcf8" stroke="#1e88e5" stroke-width="1.400"/>
<circle cx="1232.7" cy="730.3" r="3.300" fill="#b9dcf8" stroke="#1e88e5" stroke-width="1.400"/>
<line x1="404.7" y1="787.2" x2="1232.7" y2="787.2" stroke="#6a6a6a" stroke-width="1" opacity="0.8"/>
<text x="391.2" y="791.6" font-size="12.8" fill="#e6e6e6" text-anchor="end">-8</text>
<circle cx="404.7" cy="787.2" r="3.300" fill="#b9dcf8" stroke="#1e88e5" stroke-width="1.400"/>
<circle cx="1232.7" cy="787.2" r="3.300" fill="#b9dcf8" stroke="#1e88e5" stroke-width="1.400"/>
<text x="391.2" y="564.0" font-size="12.8" fill="#e6e6e6" text-anchor="end">0</text>
<rect x="414.0" y="446.0" width="19.0" height="116.6" fill="#000" opacity="0.45" filter="url(#sh)"/>
<rect x="451.7" y="534.1" width="19.0" height="28.4" fill="#000" opacity="0.45" filter="url(#sh)"/>
<rect x="489.3" y="514.2" width="19.0" height="48.4" fill="#000" opacity="0.45" filter="url(#sh)"/>
<rect x="526.9" y="480.1" width="19.0" height="82.5" fill="#000" opacity="0.45" filter="url(#sh)"/>
<rect x="564.6" y="454.5" width="19.0" height="108.1" fill="#000" opacity="0.45" filter="url(#sh)"/>
<rect x="602.2" y="463.0" width="19.0" height="99.6" fill="#000" opacity="0.45" filter="url(#sh)"/>
<rect x="639.8" y="480.1" width="19.0" height="82.5" fill="#000" opacity="0.45" filter="url(#sh)"/>
<rect x="677.5" y="508.5" width="19.0" height="54.1" fill="#000" opacity="0.45" filter="url(#sh)"/>
<rect x="715.1" y="562.6" width="19.0" height="2.8" fill="#000" opacity="0.45" filter="url(#sh)"/>
<rect x="752.7" y="562.6" width="19.0" height="71.1" fill="#000" opacity="0.45" filter="url(#sh)"/>
<rect x="790.4" y="488.6" width="19.0" height="74.0" fill="#000" opacity="0.45" filter="url(#sh)"/>
<rect x="828.0" y="517.1" width="19.0" height="45.5" fill="#000" opacity="0.45" filter="url(#sh)"/>
<rect x="865.7" y="500.0" width="19.0" height="62.6" fill="#000" opacity="0.45" filter="url(#sh)"/>
<rect x="903.3" y="511.4" width="19.0" height="51.2" fill="#000" opacity="0.45" filter="url(#sh)"/>
<rect x="940.9" y="491.5" width="19.0" height="71.1" fill="#000" opacity="0.45" filter="url(#sh)"/>
<rect x="978.6" y="480.1" width="19.0" height="82.5" fill="#000" opacity="0.45" filter="url(#sh)"/>
<rect x="1016.2" y="517.1" width="19.0" height="45.5" fill="#000" opacity="0.45" filter="url(#sh)"/>
<rect x="1053.8" y="494.3" width="19.0" height="68.3" fill="#000" opacity="0.45" filter="url(#sh)"/>
<rect x="1091.5" y="480.1" width="19.0" height="82.5" fill="#000" opacity="0.45" filter="url(#sh)"/>
<rect x="1129.1" y="497.2" width="19.0" height="65.4" fill="#000" opacity="0.45" filter="url(#sh)"/>
<rect x="1166.7" y="562.6" width="19.0" height="167.9" fill="#000" opacity="0.45" filter="url(#sh)"/>
<rect x="1204.4" y="428.9" width="19.0" height="133.7" fill="#000" opacity="0.45" filter="url(#sh)"/>
<rect x="414.0" y="443.0" width="19.0" height="116.6" fill="url(#bg)"/>
<rect x="451.7" y="531.1" width="19.0" height="28.4" fill="url(#bg)"/>
<rect x="489.3" y="511.2" width="19.0" height="48.4" fill="url(#bg)"/>
<rect x="526.9" y="477.1" width="19.0" height="82.5" fill="url(#bg)"/>
<rect x="564.6" y="451.5" width="19.0" height="108.1" fill="url(#bg)"/>
<rect x="602.2" y="460.0" width="19.0" height="99.6" fill="url(#bg)"/>
<rect x="639.8" y="477.1" width="19.0" height="82.5" fill="url(#bg)"/>
<rect x="677.5" y="505.5" width="19.0" height="54.1" fill="url(#bg)"/>
<rect x="715.1" y="559.6" width="19.0" height="2.8" fill="url(#bg)"/>
<rect x="752.7" y="559.6" width="19.0" height="71.1" fill="url(#bg)"/>
<rect x="790.4" y="485.6" width="19.0" height="74.0" fill="url(#bg)"/>
<rect x="828.0" y="514.1" width="19.0" height="45.5" fill="url(#bg)"/>
<rect x="865.7" y="497.0" width="19.0" height="62.6" fill="url(#bg)"/>
<rect x="903.3" y="508.4" width="19.0" height="51.2" fill="url(#bg)"/>
<rect x="940.9" y="488.5" width="19.0" height="71.1" fill="url(#bg)"/>
<rect x="978.6" y="477.1" width="19.0" height="82.5" fill="url(#bg)"/>
<rect x="1016.2" y="514.1" width="19.0" height="45.5" fill="url(#bg)"/>
<rect x="1053.8" y="491.3" width="19.0" height="68.3" fill="url(#bg)"/>
<rect x="1091.5" y="477.1" width="19.0" height="82.5" fill="url(#bg)"/>
<rect x="1129.1" y="494.2" width="19.0" height="65.4" fill="url(#bg)"/>
<rect x="1166.7" y="559.6" width="19.0" height="167.9" fill="url(#bg)"/>
<rect x="1204.4" y="425.9" width="19.0" height="133.7" fill="url(#bg)"/>
<line x1="404.7" y1="560.05" x2="1233.2" y2="560.05" stroke="#a6a6a6" stroke-width="1.700"/>
</svg>
<div class="t" style="left:408.82px;top:571px;line-height:15px;font-size:12.8px;color:#e0e0e0;letter-spacing:0.307px;">2000</div>
<div class="t" style="left:446.45px;top:571px;line-height:15px;font-size:12.8px;color:#e0e0e0;letter-spacing:0.307px;">2001</div>
<div class="t" style="left:484.09px;top:571px;line-height:15px;font-size:12.8px;color:#e0e0e0;letter-spacing:0.307px;">2002</div>
<div class="t" style="left:521.73px;top:571px;line-height:15px;font-size:12.8px;color:#e0e0e0;letter-spacing:0.307px;">2003</div>
<div class="t" style="left:559.36px;top:571px;line-height:15px;font-size:12.8px;color:#e0e0e0;letter-spacing:0.307px;">2004</div>
<div class="t" style="left:597.00px;top:571px;line-height:15px;font-size:12.8px;color:#e0e0e0;letter-spacing:0.307px;">2005</div>
<div class="t" style="left:634.64px;top:571px;line-height:15px;font-size:12.8px;color:#e0e0e0;letter-spacing:0.307px;">2006</div>
<div class="t" style="left:672.27px;top:571px;line-height:15px;font-size:12.8px;color:#e0e0e0;letter-spacing:0.307px;">2007</div>
<div class="t" style="left:709.91px;top:571px;line-height:15px;font-size:12.8px;color:#e0e0e0;letter-spacing:0.307px;">2008</div>
<div class="t" style="left:747.55px;top:571px;line-height:15px;font-size:12.8px;color:#e0e0e0;letter-spacing:0.307px;">2009</div>
<div class="t" style="left:785.18px;top:571px;line-height:15px;font-size:12.8px;color:#e0e0e0;letter-spacing:0.307px;">2010</div>
<div class="t" style="left:822.82px;top:571px;line-height:15px;font-size:12.8px;color:#e0e0e0;letter-spacing:0.627px;">2011</div>
<div class="t" style="left:860.45px;top:571px;line-height:15px;font-size:12.8px;color:#e0e0e0;letter-spacing:0.307px;">2012</div>
<div class="t" style="left:898.09px;top:571px;line-height:15px;font-size:12.8px;color:#e0e0e0;letter-spacing:0.307px;">2013</div>
<div class="t" style="left:935.73px;top:571px;line-height:15px;font-size:12.8px;color:#e0e0e0;letter-spacing:0.307px;">2014</div>
<div class="t" style="left:973.36px;top:571px;line-height:15px;font-size:12.8px;color:#e0e0e0;letter-spacing:0.307px;">2015</div>
<div class="t" style="left:1011.00px;top:571px;line-height:15px;font-size:12.8px;color:#e0e0e0;letter-spacing:0.307px;">2016</div>
<div class="t" style="left:1048.64px;top:571px;line-height:15px;font-size:12.8px;color:#e0e0e0;letter-spacing:0.307px;">2017</div>
<div class="t" style="left:1086.27px;top:571px;line-height:15px;font-size:12.8px;color:#e0e0e0;letter-spacing:0.307px;">2018</div>
<div class="t" style="left:1123.91px;top:571px;line-height:15px;font-size:12.8px;color:#e0e0e0;letter-spacing:0.307px;">2019</div>
<div class="t" style="left:1161.55px;top:571px;line-height:15px;font-size:12.8px;color:#e0e0e0;letter-spacing:0.307px;">2020</div>
<div class="t" style="left:1199.18px;top:571px;line-height:15px;font-size:12.8px;color:#e0e0e0;letter-spacing:0.307px;">2021</div>
<div class="t" style="left:545.30px;top:340px;line-height:25px;font-size:21.7px;font-weight:bold;color:#f2f2f2;letter-spacing:1.221px;text-shadow:1px 1px 3px rgba(0,0,0,0.45);transform-origin:0 0;transform:scaleX(1.09);">Real GDP growth (Annual percent change)</div>
<div class="abs" style="left:363px;top:318px;width:14px;height:14px;border-radius:7px;background:#fff;border:2px solid #999"></div>
<div class="abs" style="left:804px;top:318px;width:14px;height:14px;border-radius:7px;background:#fff;border:2px solid #999"></div>
<div class="abs" style="left:1246px;top:318px;width:14px;height:14px;border-radius:7px;background:#fff;border:2px solid #999"></div>
<div class="abs" style="left:363px;top:559px;width:14px;height:14px;border-radius:7px;background:#fff;border:2px solid #999"></div>
<div class="abs" style="left:1246px;top:559px;width:14px;height:14px;border-radius:7px;background:#fff;border:2px solid #999"></div>
<div class="abs" style="left:363px;top:800px;width:14px;height:14px;border-radius:7px;background:#fff;border:2px solid #999"></div>
<div class="abs" style="left:804px;top:800px;width:14px;height:14px;border-radius:7px;background:#fff;border:2px solid #999"></div>
<div class="abs" style="left:1246px;top:800px;width:14px;height:14px;border-radius:7px;background:#fff;border:2px solid #999"></div>
<div class="abs" style="left:1266px;top:323px;width:35px;height:35px;background:#fff;border:1px solid #ababab"></div>
<div class="abs" style="left:1266px;top:370px;width:35px;height:35px;background:#fff;border:1px solid #ababab"></div>
<div class="abs" style="left:1266px;top:417px;width:35px;height:35px;background:#fff;border:1px solid #ababab"></div>
<svg class="abs" style="left:1260px;top:320px" width="50" height="140" viewBox="1260 320 50 140" fill="none">
<path d="M1282.300 329.400v20M1272.100 339.400h20.500" stroke="#2da44e" stroke-width="1.400"/>
<path d="M1291.800 378.800c1.200 0.900 0.300 2.600-0.800 4l-6.800 7.600-2.300-1.900 6.300-7.600c1.200-1.400 2.600-2.800 3.600-2.100z" stroke="#555" stroke-width="1.100" fill="#fafafa"/>
<path d="M1271.600 393.500c2.600-0.300 3.600-1.500 4.800-3.300 1.400-2 4.300-2.200 5.900-0.600 1.800 1.800 1.200 4.500-0.700 5.700-3 1.900-7.200 0.700-10-1.800z" fill="#7db7ec" stroke="#1e78cf" stroke-width="1"/>
<path d="M1272.400 424h20.300v3.800l-7.300 8v8.300h-5.500v-8.300l-7.500-8z" stroke="#555" stroke-width="1.300" fill="#fafafa"/>
</svg>
<div class="abs" style="left:228px;top:88px;width:685px;height:237px;background:#fff;border:1px solid #c6c6c6;box-shadow:0 1px 3px rgba(0,0,0,0.25)"></div>
<div class="abs" style="left:230px;top:91px;width:110px;height:70px;border:4px solid #bfbfbf;background:#fff"></div>
<div class="abs" style="left:450px;top:161px;width:110px;height:70px;border:4px solid #bfbfbf;background:#fff"></div>
<svg class="abs" style="left:235px;top:98px" width="100" height="56" viewBox="0 0 100 56" font-family="Liberation Sans, sans-serif">
<rect x="0.5" y="0.5" width="99" height="55" fill="#fff" stroke="#e6e6e6" stroke-width="1"/>

<line x1="4" y1="8.80" x2="98" y2="8.80" stroke="#dcdcdc" stroke-width="0.7"/>
<line x1="4" y1="15.00" x2="98" y2="15.00" stroke="#dcdcdc" stroke-width="0.7"/>
<line x1="4" y1="21.20" x2="98" y2="21.20" stroke="#dcdcdc" stroke-width="0.7"/>
<line x1="4" y1="33.60" x2="98" y2="33.60" stroke="#dcdcdc" stroke-width="0.7"/>
<line x1="4" y1="39.80" x2="98" y2="39.80" stroke="#dcdcdc" stroke-width="0.7"/>
<line x1="4" y1="46.00" x2="98" y2="46.00" stroke="#dcdcdc" stroke-width="0.7"/>
<line x1="4" y1="52.20" x2="98" y2="52.20" stroke="#dcdcdc" stroke-width="0.7"/>
<rect x="1.6" y="8.40" width="1" height="0.8" fill="#999" opacity="0.7"/>
<rect x="1.6" y="14.60" width="1" height="0.8" fill="#999" opacity="0.7"/>
<rect x="1.6" y="20.80" width="1" height="0.8" fill="#999" opacity="0.7"/>
<rect x="1.6" y="27.00" width="1" height="0.8" fill="#999" opacity="0.7"/>
<rect x="1.6" y="33.20" width="1" height="0.8" fill="#999" opacity="0.7"/>
<rect x="1.6" y="39.40" width="1" height="0.8" fill="#999" opacity="0.7"/>
<rect x="1.6" y="45.60" width="1" height="0.8" fill="#999" opacity="0.7"/>
<rect x="1.6" y="51.80" width="1" height="0.8" fill="#999" opacity="0.7"/>
<rect x="5.05" y="14.69" width="2.3" height="12.71" fill="#6a8fd6" opacity="1"/>
<rect x="9.31" y="24.30" width="2.3" height="3.10" fill="#6a8fd6" opacity="1"/>
<rect x="13.57" y="22.13" width="2.3" height="5.27" fill="#6a8fd6" opacity="1"/>
<rect x="17.83" y="18.41" width="2.3" height="8.99" fill="#6a8fd6" opacity="1"/>
<rect x="22.09" y="15.62" width="2.3" height="11.78" fill="#6a8fd6" opacity="1"/>
<rect x="26.35" y="16.55" width="2.3" height="10.85" fill="#6a8fd6" opacity="1"/>
<rect x="30.61" y="18.41" width="2.3" height="8.99" fill="#6a8fd6" opacity="1"/>
<rect x="34.87" y="21.51" width="2.3" height="5.89" fill="#6a8fd6" opacity="1"/>
<rect x="39.13" y="27.40" width="2.3" height="0.31" fill="#6a8fd6" opacity="1"/>
<rect x="43.39" y="27.40" width="2.3" height="7.75" fill="#6a8fd6" opacity="1"/>
<rect x="47.65" y="19.34" width="2.3" height="8.06" fill="#6a8fd6" opacity="1"/>
<rect x="51.91" y="22.44" width="2.3" height="4.96" fill="#6a8fd6" opacity="1"/>
<rect x="56.17" y="20.58" width="2.3" height="6.82" fill="#6a8fd6" opacity="1"/>
<rect x="60.43" y="21.82" width="2.3" height="5.58" fill="#6a8fd6" opacity="1"/>
<rect x="64.69" y="19.65" width="2.3" height="7.75" fill="#6a8fd6" opacity="1"/>
<rect x="68.95" y="18.41" width="2.3" height="8.99" fill="#6a8fd6" opacity="1"/>
<rect x="73.21" y="22.44" width="2.3" height="4.96" fill="#6a8fd6" opacity="1"/>
<rect x="77.47" y="19.96" width="2.3" height="7.44" fill="#6a8fd6" opacity="1"/>
<rect x="81.73" y="18.41" width="2.3" height="8.99" fill="#6a8fd6" opacity="1"/>
<rect x="85.99" y="20.27" width="2.3" height="7.13" fill="#6a8fd6" opacity="1"/>
<rect x="90.25" y="27.40" width="2.3" height="18.29" fill="#6a8fd6" opacity="1"/>
<rect x="94.51" y="12.83" width="2.3" height="14.57" fill="#6a8fd6" opacity="1"/>
<line x1="4" y1="27.4" x2="98" y2="27.4" stroke="#bbb" stroke-width="0.8"/>
<line x1="4.5" y1="29.599999999999998" x2="97.5" y2="29.599999999999998" stroke="#999" stroke-width="1" stroke-dasharray="3.2 1.06" opacity="0.75"/>
<text x="50" y="5.2" font-size="2.6" font-weight="normal" fill="#666" text-anchor="middle" letter-spacing="0">Real GDP growth (Annual percent change)</text>
</svg>
<svg class="abs" style="left:345px;top:98px" width="100" height="56" viewBox="0 0 100 56" font-family="Liberation Sans, sans-serif">
<rect x="0.5" y="0.5" width="99" height="55" fill="#fff" stroke="#e6e6e6" stroke-width="1"/>

<rect x="0.68" y="8" width="2.9" height="44" fill="#e9e9e9"/>
<rect x="5.02" y="8" width="2.9" height="44" fill="#e9e9e9"/>
<rect x="9.36" y="8" width="2.9" height="44" fill="#e9e9e9"/>
<rect x="13.70" y="8" width="2.9" height="44" fill="#e9e9e9"/>
<rect x="18.04" y="8" width="2.9" height="44" fill="#e9e9e9"/>
<rect x="22.38" y="8" width="2.9" height="44" fill="#e9e9e9"/>
<rect x="26.72" y="8" width="2.9" height="44" fill="#e9e9e9"/>
<rect x="31.06" y="8" width="2.9" height="44" fill="#e9e9e9"/>
<rect x="35.40" y="8" width="2.9" height="44" fill="#e9e9e9"/>
<rect x="39.74" y="8" width="2.9" height="44" fill="#e9e9e9"/>
<rect x="44.08" y="8" width="2.9" height="44" fill="#e9e9e9"/>
<rect x="48.42" y="8" width="2.9" height="44" fill="#e9e9e9"/>
<rect x="52.76" y="8" width="2.9" height="44" fill="#e9e9e9"/>
<rect x="57.10" y="8" width="2.9" height="44" fill="#e9e9e9"/>
<rect x="61.44" y="8" width="2.9" height="44" fill="#e9e9e9"/>
<rect x="65.78" y="8" width="2.9" height="44" fill="#e9e9e9"/>
<rect x="70.12" y="8" width="2.9" height="44" fill="#e9e9e9"/>
<rect x="74.46" y="8" width="2.9" height="44" fill="#e9e9e9"/>
<rect x="78.80" y="8" width="2.9" height="44" fill="#e9e9e9"/>
<rect x="83.14" y="8" width="2.9" height="44" fill="#e9e9e9"/>
<rect x="87.48" y="8" width="2.9" height="44" fill="#e9e9e9"/>
<rect x="91.82" y="8" width="2.9" height="44" fill="#e9e9e9"/>
<rect x="96.16" y="8" width="2.9" height="44" fill="#e9e9e9"/>
<rect x="1.6" y="9.40" width="1" height="0.8" fill="#999" opacity="0.7"/>
<rect x="1.6" y="15.60" width="1" height="0.8" fill="#999" opacity="0.7"/>
<rect x="1.6" y="21.80" width="1" height="0.8" fill="#999" opacity="0.7"/>
<rect x="1.6" y="28.00" width="1" height="0.8" fill="#999" opacity="0.7"/>
<rect x="1.6" y="34.20" width="1" height="0.8" fill="#999" opacity="0.7"/>
<rect x="1.6" y="40.40" width="1" height="0.8" fill="#999" opacity="0.7"/>
<rect x="1.6" y="46.60" width="1" height="0.8" fill="#999" opacity="0.7"/>
<rect x="1.6" y="52.80" width="1" height="0.8" fill="#999" opacity="0.7"/>
<rect x="3.45" y="15.69" width="1.7" height="12.71" fill="#8faadc" opacity="1"/>
<rect x="3.30" y="14.09" width="2" height="1" fill="#999" opacity="0.6"/>
<rect x="7.79" y="25.30" width="1.7" height="3.10" fill="#8faadc" opacity="1"/>
<rect x="7.64" y="23.70" width="2" height="1" fill="#999" opacity="0.6"/>
<rect x="12.13" y="23.13" width="1.7" height="5.27" fill="#8faadc" opacity="1"/>
<rect x="11.98" y="21.53" width="2" height="1" fill="#999" opacity="0.6"/>
<rect x="16.47" y="19.41" width="1.7" height="8.99" fill="#8faadc" opacity="1"/>
<rect x="16.32" y="17.81" width="2" height="1" fill="#999" opacity="0.6"/>
<rect x="20.81" y="16.62" width="1.7" height="11.78" fill="#8faadc" opacity="1"/>
<rect x="20.66" y="15.02" width="2" height="1" fill="#999" opacity="0.6"/>
<rect x="25.15" y="17.55" width="1.7" height="10.85" fill="#8faadc" opacity="1"/>
<rect x="25.00" y="15.95" width="2" height="1" fill="#999" opacity="0.6"/>
<rect x="29.49" y="19.41" width="1.7" height="8.99" fill="#8faadc" opacity="1"/>
<rect x="29.34" y="17.81" width="2" height="1" fill="#999" opacity="0.6"/>
<rect x="33.83" y="22.51" width="1.7" height="5.89" fill="#8faadc" opacity="1"/>
<rect x="33.68" y="20.91" width="2" height="1" fill="#999" opacity="0.6"/>
<rect x="38.17" y="28.40" width="1.7" height="0.31" fill="#8faadc" opacity="1"/>
<rect x="38.02" y="29.31" width="2" height="1" fill="#999" opacity="0.6"/>
<rect x="42.51" y="28.40" width="1.7" height="7.75" fill="#8faadc" opacity="1"/>
<rect x="42.36" y="36.75" width="2" height="1" fill="#999" opacity="0.6"/>
<rect x="46.85" y="20.34" width="1.7" height="8.06" fill="#8faadc" opacity="1"/>
<rect x="46.70" y="18.74" width="2" height="1" fill="#999" opacity="0.6"/>
<rect x="51.19" y="23.44" width="1.7" height="4.96" fill="#8faadc" opacity="1"/>
<rect x="51.04" y="21.84" width="2" height="1" fill="#999" opacity="0.6"/>
<rect x="55.53" y="21.58" width="1.7" height="6.82" fill="#8faadc" opacity="1"/>
<rect x="55.38" y="19.98" width="2" height="1" fill="#999" opacity="0.6"/>
<rect x="59.87" y="22.82" width="1.7" height="5.58" fill="#8faadc" opacity="1"/>
<rect x="59.72" y="21.22" width="2" height="1" fill="#999" opacity="0.6"/>
<rect x="64.21" y="20.65" width="1.7" height="7.75" fill="#8faadc" opacity="1"/>
<rect x="64.06" y="19.05" width="2" height="1" fill="#999" opacity="0.6"/>
<rect x="68.55" y="19.41" width="1.7" height="8.99" fill="#8faadc" opacity="1"/>
<rect x="68.40" y="17.81" width="2" height="1" fill="#999" opacity="0.6"/>
<rect x="72.89" y="23.44" width="1.7" height="4.96" fill="#8faadc" opacity="1"/>
<rect x="72.74" y="21.84" width="2" height="1" fill="#999" opacity="0.6"/>
<rect x="77.23" y="20.96" width="1.7" height="7.44" fill="#8faadc" opacity="1"/>
<rect x="77.08" y="19.36" width="2" height="1" fill="#999" opacity="0.6"/>
<rect x="81.57" y="19.41" width="1.7" height="8.99" fill="#8faadc" opacity="1"/>
<rect x="81.42" y="17.81" width="2" height="1" fill="#999" opacity="0.6"/>
<rect x="85.91" y="21.27" width="1.7" height="7.13" fill="#8faadc" opacity="1"/>
<rect x="85.76" y="19.67" width="2" height="1" fill="#999" opacity="0.6"/>
<rect x="90.25" y="28.40" width="1.7" height="18.29" fill="#8faadc" opacity="1"/>
<rect x="90.10" y="47.29" width="2" height="1" fill="#999" opacity="0.6"/>
<rect x="94.59" y="13.83" width="1.7" height="14.57" fill="#8faadc" opacity="1"/>
<rect x="94.44" y="12.23" width="2" height="1" fill="#999" opacity="0.6"/>
<line x1="4" y1="28.4" x2="98" y2="28.4" stroke="#bbb" stroke-width="0.8"/>
<line x1="4.5" y1="30.599999999999998" x2="97.5" y2="30.599999999999998" stroke="#999" stroke-width="1" stroke-dasharray="3.2 1.06" opacity="0.75"/>
<text x="50" y="5.2" font-size="2.9" font-weight="bold" fill="#8a8a8a" text-anchor="middle" letter-spacing="0.1">REAL GDP GROWTH (ANNUAL PERCENT CHANGE)</text>
</svg>
<svg class="abs" style="left:455px;top:98px" width="100" height="56" viewBox="0 0 100 56" font-family="Liberation Sans, sans-serif">
<defs><pattern id="dp" width="3" height="2.600" patternUnits="userSpaceOnUse"><rect width="3" height="1.700" fill="#4472c4"/></pattern></defs>
<rect x="0.5" y="0.5" width="99" height="55" fill="#fff" stroke="#e6e6e6" stroke-width="1"/>

<rect x="1.6" y="12.70" width="1" height="0.8" fill="#999" opacity="0.7"/>
<rect x="1.6" y="18.50" width="1" height="0.8" fill="#999" opacity="0.7"/>
<rect x="1.6" y="24.30" width="1" height="0.8" fill="#999" opacity="0.7"/>
<rect x="1.6" y="30.10" width="1" height="0.8" fill="#999" opacity="0.7"/>
<rect x="1.6" y="35.90" width="1" height="0.8" fill="#999" opacity="0.7"/>
<rect x="1.6" y="41.70" width="1" height="0.8" fill="#999" opacity="0.7"/>
<rect x="1.6" y="47.50" width="1" height="0.8" fill="#999" opacity="0.7"/>
<rect x="1.6" y="53.30" width="1" height="0.8" fill="#999" opacity="0.7"/>
<rect x="4.70" y="18.61" width="3" height="11.89" fill="url(#dp)" opacity="1"/>
<rect x="8.96" y="27.60" width="3" height="2.90" fill="url(#dp)" opacity="1"/>
<rect x="13.22" y="25.57" width="3" height="4.93" fill="url(#dp)" opacity="1"/>
<rect x="17.48" y="22.09" width="3" height="8.41" fill="url(#dp)" opacity="1"/>
<rect x="21.74" y="19.48" width="3" height="11.02" fill="url(#dp)" opacity="1"/>
<rect x="26.00" y="20.35" width="3" height="10.15" fill="url(#dp)" opacity="1"/>
<rect x="30.26" y="22.09" width="3" height="8.41" fill="url(#dp)" opacity="1"/>
<rect x="34.52" y="24.99" width="3" height="5.51" fill="url(#dp)" opacity="1"/>
<rect x="38.78" y="30.50" width="3" height="0.29" fill="url(#dp)" opacity="1"/>
<rect x="43.04" y="30.50" width="3" height="7.25" fill="url(#dp)" opacity="1"/>
<rect x="47.30" y="22.96" width="3" height="7.54" fill="url(#dp)" opacity="1"/>
<rect x="51.56" y="25.86" width="3" height="4.64" fill="url(#dp)" opacity="1"/>
<rect x="55.82" y="24.12" width="3" height="6.38" fill="url(#dp)" opacity="1"/>
<rect x="60.08" y="25.28" width="3" height="5.22" fill="url(#dp)" opacity="1"/>
<rect x="64.34" y="23.25" width="3" height="7.25" fill="url(#dp)" opacity="1"/>
<rect x="68.60" y="22.09" width="3" height="8.41" fill="url(#dp)" opacity="1"/>
<rect x="72.86" y="25.86" width="3" height="4.64" fill="url(#dp)" opacity="1"/>
<rect x="77.12" y="23.54" width="3" height="6.96" fill="url(#dp)" opacity="1"/>
<rect x="81.38" y="22.09" width="3" height="8.41" fill="url(#dp)" opacity="1"/>
<rect x="85.64" y="23.83" width="3" height="6.67" fill="url(#dp)" opacity="1"/>
<rect x="89.90" y="30.50" width="3" height="17.11" fill="url(#dp)" opacity="1"/>
<rect x="94.16" y="16.87" width="3" height="13.63" fill="url(#dp)" opacity="1"/>
<line x1="4" y1="30.5" x2="98" y2="30.5" stroke="#bbb" stroke-width="0.8"/>
<line x1="4.5" y1="32.7" x2="97.5" y2="32.7" stroke="#999" stroke-width="1" stroke-dasharray="3.2 1.06" opacity="0.75"/>
<text x="50" y="5.4" font-size="3.3" font-weight="bold" fill="#777" text-anchor="middle">REAL GDP GROWTH (ANNUAL PERCENT</text>
<text x="50" y="9.1" font-size="3.3" font-weight="bold" fill="#777" text-anchor="middle">CHANGE)</text>
</svg>
<svg class="abs" style="left:565px;top:98px" width="100" height="56" viewBox="0 0 100 56" font-family="Liberation Sans, sans-serif">
<defs><linearGradient id="g4" x1="0" y1="0" x2="0" y2="1"><stop offset="0" stop-color="#fff"/><stop offset="0.45" stop-color="#f4f4f4"/><stop offset="0.85" stop-color="#cfcfcf"/><stop offset="1" stop-color="#e8e8e8"/></linearGradient></defs>
<rect x="0.5" y="0.5" width="99" height="55" fill="url(#g4)" stroke="#e6e6e6" stroke-width="1"/>

<rect x="1.6" y="8.40" width="1" height="0.8" fill="#999" opacity="0.7"/>
<rect x="1.6" y="14.60" width="1" height="0.8" fill="#999" opacity="0.7"/>
<rect x="1.6" y="20.80" width="1" height="0.8" fill="#999" opacity="0.7"/>
<rect x="1.6" y="27.00" width="1" height="0.8" fill="#999" opacity="0.7"/>
<rect x="1.6" y="33.20" width="1" height="0.8" fill="#999" opacity="0.7"/>
<rect x="1.6" y="39.40" width="1" height="0.8" fill="#999" opacity="0.7"/>
<rect x="1.6" y="45.60" width="1" height="0.8" fill="#999" opacity="0.7"/>
<rect x="1.6" y="51.80" width="1" height="0.8" fill="#999" opacity="0.7"/>
<rect x="4.50" y="14.69" width="3.4" height="12.71" fill="#4472c4" opacity="1"/>
<rect x="5.20" y="13.09" width="2" height="1" fill="#dfe8f7" opacity="0.6"/>
<rect x="8.76" y="24.30" width="3.4" height="3.10" fill="#4472c4" opacity="1"/>
<rect x="9.46" y="22.70" width="2" height="1" fill="#dfe8f7" opacity="0.6"/>
<rect x="13.02" y="22.13" width="3.4" height="5.27" fill="#4472c4" opacity="1"/>
<rect x="13.72" y="20.53" width="2" height="1" fill="#dfe8f7" opacity="0.6"/>
<rect x="17.28" y="18.41" width="3.4" height="8.99" fill="#4472c4" opacity="1"/>
<rect x="17.98" y="16.81" width="2" height="1" fill="#dfe8f7" opacity="0.6"/>
<rect x="21.54" y="15.62" width="3.4" height="11.78" fill="#4472c4" opacity="1"/>
<rect x="22.24" y="14.02" width="2" height="1" fill="#dfe8f7" opacity="0.6"/>
<rect x="25.80" y="16.55" width="3.4" height="10.85" fill="#4472c4" opacity="1"/>
<rect x="26.50" y="14.95" width="2" height="1" fill="#dfe8f7" opacity="0.6"/>
<rect x="30.06" y="18.41" width="3.4" height="8.99" fill="#4472c4" opacity="1"/>
<rect x="30.76" y="16.81" width="2" height="1" fill="#dfe8f7" opacity="0.6"/>
<rect x="34.32" y="21.51" width="3.4" height="5.89" fill="#4472c4" opacity="1"/>
<rect x="35.02" y="19.91" width="2" height="1" fill="#dfe8f7" opacity="0.6"/>
<rect x="38.58" y="27.40" width="3.4" height="0.31" fill="#4472c4" opacity="1"/>
<rect x="39.28" y="28.31" width="2" height="1" fill="#dfe8f7" opacity="0.6"/>
<rect x="42.84" y="27.40" width="3.4" height="7.75" fill="#4472c4" opacity="1"/>
<rect x="43.54" y="35.75" width="2" height="1" fill="#dfe8f7" opacity="0.6"/>
<rect x="47.10" y="19.34" width="3.4" height="8.06" fill="#4472c4" opacity="1"/>
<rect x="47.80" y="17.74" width="2" height="1" fill="#dfe8f7" opacity="0.6"/>
<rect x="51.36" y="22.44" width="3.4" height="4.96" fill="#4472c4" opacity="1"/>
<rect x="52.06" y="20.84" width="2" height="1" fill="#dfe8f7" opacity="0.6"/>
<rect x="55.62" y="20.58" width="3.4" height="6.82" fill="#4472c4" opacity="1"/>
<rect x="56.32" y="18.98" width="2" height="1" fill="#dfe8f7" opacity="0.6"/>
<rect x="59.88" y="21.82" width="3.4" height="5.58" fill="#4472c4" opacity="1"/>
<rect x="60.58" y="20.22" width="2" height="1" fill="#dfe8f7" opacity="0.6"/>
<rect x="64.14" y="19.65" width="3.4" height="7.75" fill="#4472c4" opacity="1"/>
<rect x="64.84" y="18.05" width="2" height="1" fill="#dfe8f7" opacity="0.6"/>
<rect x="68.40" y="18.41" width="3.4" height="8.99" fill="#4472c4" opacity="1"/>
<rect x="69.10" y="16.81" width="2" height="1" fill="#dfe8f7" opacity="0.6"/>
<rect x="72.66" y="22.44" width="3.4" height="4.96" fill="#4472c4" opacity="1"/>
<rect x="73.36" y="20.84" width="2" height="1" fill="#dfe8f7" opacity="0.6"/>
<rect x="76.92" y="19.96" width="3.4" height="7.44" fill="#4472c4" opacity="1"/>
<rect x="77.62" y="18.36" width="2" height="1" fill="#dfe8f7" opacity="0.6"/>
<rect x="81.18" y="18.41" width="3.4" height="8.99" fill="#4472c4" opacity="1"/>
<rect x="81.88" y="16.81" width="2" height="1" fill="#dfe8f7" opacity="0.6"/>
<rect x="85.44" y="20.27" width="3.4" height="7.13" fill="#4472c4" opacity="1"/>
<rect x="86.14" y="18.67" width="2" height="1" fill="#dfe8f7" opacity="0.6"/>
<rect x="89.70" y="27.40" width="3.4" height="18.29" fill="#4472c4" opacity="1"/>
<rect x="90.40" y="46.29" width="2" height="1" fill="#dfe8f7" opacity="0.6"/>
<rect x="93.96" y="12.83" width="3.4" height="14.57" fill="#4472c4" opacity="1"/>
<rect x="94.66" y="11.23" width="2" height="1" fill="#dfe8f7" opacity="0.6"/>
<line x1="4" y1="27.4" x2="98" y2="27.4" stroke="#bbb" stroke-width="0.8"/>
<line x1="4.5" y1="29.599999999999998" x2="97.5" y2="29.599999999999998" stroke="#999" stroke-width="1" stroke-dasharray="3.2 1.06" opacity="0.75"/>
<text x="50" y="5.2" font-size="2.6" font-weight="normal" fill="#555" text-anchor="middle" letter-spacing="0">Real GDP growth (Annual percent change)</text>
</svg>
<svg class="abs" style="left:675px;top:98px" width="100" height="56" viewBox="0 0 100 56" font-family="Liberation Sans, sans-serif">
<defs><linearGradient id="g5" x1="0" y1="0" x2="0" y2="1"><stop offset="0" stop-color="#bcbcbc"/><stop offset="0.300" stop-color="#ededed"/><stop offset="0.700" stop-color="#d9d9d9"/><stop offset="1" stop-color="#b0b0b0"/></linearGradient></defs>
<rect x="0.5" y="0.5" width="99" height="55" fill="url(#g5)" stroke="#aaa" stroke-width="1"/>

<line x1="4" y1="8.80" x2="98" y2="8.80" stroke="#9c9c9c" stroke-width="0.7"/>
<line x1="4" y1="15.00" x2="98" y2="15.00" stroke="#9c9c9c" stroke-width="0.7"/>
<line x1="4" y1="21.20" x2="98" y2="21.20" stroke="#9c9c9c" stroke-width="0.7"/>
<line x1="4" y1="33.60" x2="98" y2="33.60" stroke="#9c9c9c" stroke-width="0.7"/>
<line x1="4" y1="39.80" x2="98" y2="39.80" stroke="#9c9c9c" stroke-width="0.7"/>
<line x1="4" y1="46.00" x2="98" y2="46.00" stroke="#9c9c9c" stroke-width="0.7"/>
<line x1="4" y1="52.20" x2="98" y2="52.20" stroke="#9c9c9c" stroke-width="0.7"/>
<rect x="1.6" y="8.40" width="1" height="0.8" fill="#999" opacity="0.7"/>
<rect x="1.6" y="14.60" width="1" height="0.8" fill="#999" opacity="0.7"/>
<rect x="1.6" y="20.80" width="1" height="0.8" fill="#999" opacity="0.7"/>
<rect x="1.6" y="27.00" width="1" height="0.8" fill="#999" opacity="0.7"/>
<rect x="1.6" y="33.20" width="1" height="0.8" fill="#999" opacity="0.7"/>
<rect x="1.6" y="39.40" width="1" height="0.8" fill="#999" opacity="0.7"/>
<rect x="1.6" y="45.60" width="1" height="0.8" fill="#999" opacity="0.7"/>
<rect x="1.6" y="51.80" width="1" height="0.8" fill="#999" opacity="0.7"/>
<rect x="5.30" y="14.69" width="1.8" height="12.71" fill="#5b86d4" opacity="1"/>
<rect x="9.56" y="24.30" width="1.8" height="3.10" fill="#5b86d4" opacity="1"/>
<rect x="13.82" y="22.13" width="1.8" height="5.27" fill="#5b86d4" opacity="1"/>
<rect x="18.08" y="18.41" width="1.8" height="8.99" fill="#5b86d4" opacity="1"/>
<rect x="22.34" y="15.62" width="1.8" height="11.78" fill="#5b86d4" opacity="1"/>
<rect x="26.60" y="16.55" width="1.8" height="10.85" fill="#5b86d4" opacity="1"/>
<rect x="30.86" y="18.41" width="1.8" height="8.99" fill="#5b86d4" opacity="1"/>
<rect x="35.12" y="21.51" width="1.8" height="5.89" fill="#5b86d4" opacity="1"/>
<rect x="39.38" y="27.40" width="1.8" height="0.31" fill="#5b86d4" opacity="1"/>
<rect x="43.64" y="27.40" width="1.8" height="7.75" fill="#5b86d4" opacity="1"/>
<rect x="47.90" y="19.34" width="1.8" height="8.06" fill="#5b86d4" opacity="1"/>
<rect x="52.16" y="22.44" width="1.8" height="4.96" fill="#5b86d4" opacity="1"/>
<rect x="56.42" y="20.58" width="1.8" height="6.82" fill="#5b86d4" opacity="1"/>
<rect x="60.68" y="21.82" width="1.8" height="5.58" fill="#5b86d4" opacity="1"/>
<rect x="64.94" y="19.65" width="1.8" height="7.75" fill="#5b86d4" opacity="1"/>
<rect x="69.20" y="18.41" width="1.8" height="8.99" fill="#5b86d4" opacity="1"/>
<rect x="73.46" y="22.44" width="1.8" height="4.96" fill="#5b86d4" opacity="1"/>
<rect x="77.72" y="19.96" width="1.8" height="7.44" fill="#5b86d4" opacity="1"/>
<rect x="81.98" y="18.41" width="1.8" height="8.99" fill="#5b86d4" opacity="1"/>
<rect x="86.24" y="20.27" width="1.8" height="7.13" fill="#5b86d4" opacity="1"/>
<rect x="90.50" y="27.40" width="1.8" height="18.29" fill="#5b86d4" opacity="1"/>
<rect x="94.76" y="12.83" width="1.8" height="14.57" fill="#5b86d4" opacity="1"/>
<line x1="4" y1="27.4" x2="98" y2="27.4" stroke="#333" stroke-width="0.8"/>
<line x1="4.5" y1="29.599999999999998" x2="97.5" y2="29.599999999999998" stroke="#999" stroke-width="1" stroke-dasharray="3.2 1.06" opacity="0.75"/>
<text x="50" y="5.2" font-size="2.8" font-weight="bold" fill="#222" text-anchor="middle" letter-spacing="0">Real GDP growth (Annual percent change)</text>
</svg>
<svg class="abs" style="left:785px;top:98px" width="100" height="56" viewBox="0 0 100 56" font-family="Liberation Sans, sans-serif">
<rect x="0.5" y="0.5" width="99" height="55" fill="#fff" stroke="#e6e6e6" stroke-width="1"/>

<line x1="4" y1="8.80" x2="98" y2="8.80" stroke="#dcdcdc" stroke-width="0.7"/>
<line x1="4" y1="15.00" x2="98" y2="15.00" stroke="#dcdcdc" stroke-width="0.7"/>
<line x1="4" y1="21.20" x2="98" y2="21.20" stroke="#dcdcdc" stroke-width="0.7"/>
<line x1="4" y1="33.60" x2="98" y2="33.60" stroke="#dcdcdc" stroke-width="0.7"/>
<line x1="4" y1="39.80" x2="98" y2="39.80" stroke="#dcdcdc" stroke-width="0.7"/>
<line x1="4" y1="46.00" x2="98" y2="46.00" stroke="#dcdcdc" stroke-width="0.7"/>
<line x1="4" y1="52.20" x2="98" y2="52.20" stroke="#dcdcdc" stroke-width="0.7"/>
<rect x="1.6" y="8.40" width="1" height="0.8" fill="#999" opacity="0.7"/>
<rect x="1.6" y="14.60" width="1" height="0.8" fill="#999" opacity="0.7"/>
<rect x="1.6" y="20.80" width="1" height="0.8" fill="#999" opacity="0.7"/>
<rect x="1.6" y="27.00" width="1" height="0.8" fill="#999" opacity="0.7"/>
<rect x="1.6" y="33.20" width="1" height="0.8" fill="#999" opacity="0.7"/>
<rect x="1.6" y="39.40" width="1" height="0.8" fill="#999" opacity="0.7"/>
<rect x="1.6" y="45.60" width="1" height="0.8" fill="#999" opacity="0.7"/>
<rect x="1.6" y="51.80" width="1" height="0.8" fill="#999" opacity="0.7"/>
<rect x="4.55" y="14.69" width="3.3" height="12.71" fill="#4d79c7" opacity="1"/>
<rect x="8.81" y="24.30" width="3.3" height="3.10" fill="#4d79c7" opacity="1"/>
<rect x="13.07" y="22.13" width="3.3" height="5.27" fill="#4d79c7" opacity="1"/>
<rect x="17.33" y="18.41" width="3.3" height="8.99" fill="#4d79c7" opacity="1"/>
<rect x="21.59" y="15.62" width="3.3" height="11.78" fill="#4d79c7" opacity="1"/>
<rect x="25.85" y="16.55" width="3.3" height="10.85" fill="#4d79c7" opacity="1"/>
<rect x="30.11" y="18.41" width="3.3" height="8.99" fill="#4d79c7" opacity="1"/>
<rect x="34.37" y="21.51" width="3.3" height="5.89" fill="#4d79c7" opacity="1"/>
<rect x="38.63" y="27.40" width="3.3" height="0.31" fill="#4d79c7" opacity="1"/>
<rect x="42.89" y="27.40" width="3.3" height="7.75" fill="#4d79c7" opacity="1"/>
<rect x="47.15" y="19.34" width="3.3" height="8.06" fill="#4d79c7" opacity="1"/>
<rect x="51.41" y="22.44" width="3.3" height="4.96" fill="#4d79c7" opacity="1"/>
<rect x="55.67" y="20.58" width="3.3" height="6.82" fill="#4d79c7" opacity="1"/>
<rect x="59.93" y="21.82" width="3.3" height="5.58" fill="#4d79c7" opacity="1"/>
<rect x="64.19" y="19.65" width="3.3" height="7.75" fill="#4d79c7" opacity="1"/>
<rect x="68.45" y="18.41" width="3.3" height="8.99" fill="#4d79c7" opacity="1"/>
<rect x="72.71" y="22.44" width="3.3" height="4.96" fill="#4d79c7" opacity="1"/>
<rect x="76.97" y="19.96" width="3.3" height="7.44" fill="#4d79c7" opacity="1"/>
<rect x="81.23" y="18.41" width="3.3" height="8.99" fill="#4d79c7" opacity="1"/>
<rect x="85.49" y="20.27" width="3.3" height="7.13" fill="#4d79c7" opacity="1"/>
<rect x="89.75" y="27.40" width="3.3" height="18.29" fill="#4d79c7" opacity="1"/>
<rect x="94.01" y="12.83" width="3.3" height="14.57" fill="#4d79c7" opacity="1"/>
<line x1="4" y1="27.4" x2="98" y2="27.4" stroke="#bbb" stroke-width="0.8"/>
<line x1="4.5" y1="29.599999999999998" x2="97.5" y2="29.599999999999998" stroke="#999" stroke-width="1" stroke-dasharray="3.2 1.06" opacity="0.75"/>
<text x="50" y="5.2" font-size="2.6" font-weight="normal" fill="#888" text-anchor="middle" letter-spacing="0">Real GDP growth (Annual percent change)</text>
</svg>
<svg class="abs" style="left:235px;top:168px" width="100" height="56" viewBox="0 0 100 56" font-family="Liberation Sans, sans-serif">
<rect x="0.5" y="0.5" width="99" height="55" fill="#fff" stroke="#d5dcec" stroke-width="1"/>

<line x1="4" y1="8.80" x2="98" y2="8.80" stroke="#dcdcdc" stroke-width="0.7"/>
<line x1="4" y1="15.00" x2="98" y2="15.00" stroke="#dcdcdc" stroke-width="0.7"/>
<line x1="4" y1="21.20" x2="98" y2="21.20" stroke="#dcdcdc" stroke-width="0.7"/>
<line x1="4" y1="33.60" x2="98" y2="33.60" stroke="#dcdcdc" stroke-width="0.7"/>
<line x1="4" y1="39.80" x2="98" y2="39.80" stroke="#dcdcdc" stroke-width="0.7"/>
<line x1="4" y1="46.00" x2="98" y2="46.00" stroke="#dcdcdc" stroke-width="0.7"/>
<line x1="4" y1="52.20" x2="98" y2="52.20" stroke="#dcdcdc" stroke-width="0.7"/>
<rect x="1.6" y="8.40" width="1" height="0.8" fill="#999" opacity="0.7"/>
<rect x="1.6" y="14.60" width="1" height="0.8" fill="#999" opacity="0.7"/>
<rect x="1.6" y="20.80" width="1" height="0.8" fill="#999" opacity="0.7"/>
<rect x="1.6" y="27.00" width="1" height="0.8" fill="#999" opacity="0.7"/>
<rect x="1.6" y="33.20" width="1" height="0.8" fill="#999" opacity="0.7"/>
<rect x="1.6" y="39.40" width="1" height="0.8" fill="#999" opacity="0.7"/>
<rect x="1.6" y="45.60" width="1" height="0.8" fill="#999" opacity="0.7"/>
<rect x="1.6" y="51.80" width="1" height="0.8" fill="#999" opacity="0.7"/>
<rect x="5.05" y="14.69" width="2.3" height="12.71" fill="#4472c4" opacity="1"/>
<rect x="9.31" y="24.30" width="2.3" height="3.10" fill="#4472c4" opacity="1"/>
<rect x="13.57" y="22.13" width="2.3" height="5.27" fill="#4472c4" opacity="1"/>
<rect x="17.83" y="18.41" width="2.3" height="8.99" fill="#4472c4" opacity="1"/>
<rect x="22.09" y="15.62" width="2.3" height="11.78" fill="#4472c4" opacity="1"/>
<rect x="26.35" y="16.55" width="2.3" height="10.85" fill="#4472c4" opacity="1"/>
<rect x="30.61" y="18.41" width="2.3" height="8.99" fill="#4472c4" opacity="1"/>
<rect x="34.87" y="21.51" width="2.3" height="5.89" fill="#4472c4" opacity="1"/>
<rect x="39.13" y="27.40" width="2.3" height="0.31" fill="#4472c4" opacity="1"/>
<rect x="43.39" y="27.40" width="2.3" height="7.75" fill="#4472c4" opacity="1"/>
<rect x="47.65" y="19.34" width="2.3" height="8.06" fill="#4472c4" opacity="1"/>
<rect x="51.91" y="22.44" width="2.3" height="4.96" fill="#4472c4" opacity="1"/>
<rect x="56.17" y="20.58" width="2.3" height="6.82" fill="#4472c4" opacity="1"/>
<rect x="60.43" y="21.82" width="2.3" height="5.58" fill="#4472c4" opacity="1"/>
<rect x="64.69" y="19.65" width="2.3" height="7.75" fill="#4472c4" opacity="1"/>
<rect x="68.95" y="18.41" width="2.3" height="8.99" fill="#4472c4" opacity="1"/>
<rect x="73.21" y="22.44" width="2.3" height="4.96" fill="#4472c4" opacity="1"/>
<rect x="77.47" y="19.96" width="2.3" height="7.44" fill="#4472c4" opacity="1"/>
<rect x="81.73" y="18.41" width="2.3" height="8.99" fill="#4472c4" opacity="1"/>
<rect x="85.99" y="20.27" width="2.3" height="7.13" fill="#4472c4" opacity="1"/>
<rect x="90.25" y="27.40" width="2.3" height="18.29" fill="#4472c4" opacity="1"/>
<rect x="94.51" y="12.83" width="2.3" height="14.57" fill="#4472c4" opacity="1"/>
<line x1="4" y1="27.4" x2="98" y2="27.4" stroke="#bbb" stroke-width="0.8"/>
<line x1="4.5" y1="29.599999999999998" x2="97.5" y2="29.599999999999998" stroke="#999" stroke-width="1" stroke-dasharray="3.2 1.06" opacity="0.75"/>
<text x="50" y="5.2" font-size="2.8" font-weight="bold" fill="#555" text-anchor="middle" letter-spacing="0">Real GDP growth (Annual percent change)</text>
</svg>
<svg class="abs" style="left:345px;top:168px" width="100" height="56" viewBox="0 0 100 56" font-family="Liberation Sans, sans-serif">
<defs><pattern id="hx" width="4.260" height="5" patternUnits="userSpaceOnUse"><rect width="4.260" height="5" fill="#fff"/><path d="M0 0h4.260M0 0v5" stroke="#d8d8d8" stroke-width="0.700" fill="none"/></pattern></defs>
<rect x="0.5" y="0.5" width="99" height="55" fill="url(#hx)" stroke="#e6e6e6" stroke-width="1"/>

<line x1="4" y1="8.80" x2="98" y2="8.80" stroke="#cfcfcf" stroke-width="0.7"/>
<line x1="4" y1="15.00" x2="98" y2="15.00" stroke="#cfcfcf" stroke-width="0.7"/>
<line x1="4" y1="21.20" x2="98" y2="21.20" stroke="#cfcfcf" stroke-width="0.7"/>
<line x1="4" y1="33.60" x2="98" y2="33.60" stroke="#cfcfcf" stroke-width="0.7"/>
<line x1="4" y1="39.80" x2="98" y2="39.80" stroke="#cfcfcf" stroke-width="0.7"/>
<line x1="4" y1="46.00" x2="98" y2="46.00" stroke="#cfcfcf" stroke-width="0.7"/>
<line x1="4" y1="52.20" x2="98" y2="52.20" stroke="#cfcfcf" stroke-width="0.7"/>
<rect x="1.6" y="8.40" width="1" height="0.8" fill="#999" opacity="0.7"/>
<rect x="1.6" y="14.60" width="1" height="0.8" fill="#999" opacity="0.7"/>
<rect x="1.6" y="20.80" width="1" height="0.8" fill="#999" opacity="0.7"/>
<rect x="1.6" y="27.00" width="1" height="0.8" fill="#999" opacity="0.7"/>
<rect x="1.6" y="33.20" width="1" height="0.8" fill="#999" opacity="0.7"/>
<rect x="1.6" y="39.40" width="1" height="0.8" fill="#999" opacity="0.7"/>
<rect x="1.6" y="45.60" width="1" height="0.8" fill="#999" opacity="0.7"/>
<rect x="1.6" y="51.80" width="1" height="0.8" fill="#999" opacity="0.7"/>
<rect x="5.20" y="14.69" width="2" height="12.71" fill="#7f9fda" opacity="1"/>
<rect x="9.46" y="24.30" width="2" height="3.10" fill="#7f9fda" opacity="1"/>
<rect x="13.72" y="22.13" width="2" height="5.27" fill="#7f9fda" opacity="1"/>
<rect x="17.98" y="18.41" width="2" height="8.99" fill="#7f9fda" opacity="1"/>
<rect x="22.24" y="15.62" width="2" height="11.78" fill="#7f9fda" opacity="1"/>
<rect x="26.50" y="16.55" width="2" height="10.85" fill="#7f9fda" opacity="1"/>
<rect x="30.76" y="18.41" width="2" height="8.99" fill="#7f9fda" opacity="1"/>
<rect x="35.02" y="21.51" width="2" height="5.89" fill="#7f9fda" opacity="1"/>
<rect x="39.28" y="27.40" width="2" height="0.31" fill="#7f9fda" opacity="1"/>
<rect x="43.54" y="27.40" width="2" height="7.75" fill="#7f9fda" opacity="1"/>
<rect x="47.80" y="19.34" width="2" height="8.06" fill="#7f9fda" opacity="1"/>
<rect x="52.06" y="22.44" width="2" height="4.96" fill="#7f9fda" opacity="1"/>
<rect x="56.32" y="20.58" width="2" height="6.82" fill="#7f9fda" opacity="1"/>
<rect x="60.58" y="21.82" width="2" height="5.58" fill="#7f9fda" opacity="1"/>
<rect x="64.84" y="19.65" width="2" height="7.75" fill="#7f9fda" opacity="1"/>
<rect x="69.10" y="18.41" width="2" height="8.99" fill="#7f9fda" opacity="1"/>
<rect x="73.36" y="22.44" width="2" height="4.96" fill="#7f9fda" opacity="1"/>
<rect x="77.62" y="19.96" width="2" height="7.44" fill="#7f9fda" opacity="1"/>
<rect x="81.88" y="18.41" width="2" height="8.99" fill="#7f9fda" opacity="1"/>
<rect x="86.14" y="20.27" width="2" height="7.13" fill="#7f9fda" opacity="1"/>
<rect x="90.40" y="27.40" width="2" height="18.29" fill="#7f9fda" opacity="1"/>
<rect x="94.66" y="12.83" width="2" height="14.57" fill="#7f9fda" opacity="1"/>
<line x1="4" y1="27.4" x2="98" y2="27.4" stroke="#bbb" stroke-width="0.8"/>
<line x1="4.5" y1="29.599999999999998" x2="97.5" y2="29.599999999999998" stroke="#999" stroke-width="1" stroke-dasharray="3.2 1.06" opacity="0.75"/>
<text x="50" y="5.2" font-size="2.6" font-weight="normal" fill="#888" text-anchor="middle" letter-spacing="0">Real GDP growth (Annual percent change)</text>
</svg>
<svg class="abs" style="left:455px;top:168px" width="100" height="57" viewBox="0 0 100 57" font-family="Liberation Sans, sans-serif">
<defs><radialGradient id="g9" cx="0.500" cy="0.500" r="0.700"><stop offset="0" stop-color="#5e5e5e"/><stop offset="1" stop-color="#262626"/></radialGradient></defs>
<rect x="0.5" y="0.5" width="99" height="56" fill="url(#g9)" stroke="#333" stroke-width="1"/>

<line x1="4" y1="8.80" x2="98" y2="8.80" stroke="#6a6a6a" stroke-width="0.7"/>
<line x1="4" y1="15.00" x2="98" y2="15.00" stroke="#6a6a6a" stroke-width="0.7"/>
<line x1="4" y1="21.20" x2="98" y2="21.20" stroke="#6a6a6a" stroke-width="0.7"/>
<line x1="4" y1="33.60" x2="98" y2="33.60" stroke="#6a6a6a" stroke-width="0.7"/>
<line x1="4" y1="39.80" x2="98" y2="39.80" stroke="#6a6a6a" stroke-width="0.7"/>
<line x1="4" y1="46.00" x2="98" y2="46.00" stroke="#6a6a6a" stroke-width="0.7"/>
<line x1="4" y1="52.20" x2="98" y2="52.20" stroke="#6a6a6a" stroke-width="0.7"/>
<rect x="1.6" y="8.40" width="1" height="0.8" fill="#ccc" opacity="0.7"/>
<rect x="1.6" y="14.60" width="1" height="0.8" fill="#ccc" opacity="0.7"/>
<rect x="1.6" y="20.80" width="1" height="0.8" fill="#ccc" opacity="0.7"/>
<rect x="1.6" y="27.00" width="1" height="0.8" fill="#ccc" opacity="0.7"/>
<rect x="1.6" y="33.20" width="1" height="0.8" fill="#ccc" opacity="0.7"/>
<rect x="1.6" y="39.40" width="1" height="0.8" fill="#ccc" opacity="0.7"/>
<rect x="1.6" y="45.60" width="1" height="0.8" fill="#ccc" opacity="0.7"/>
<rect x="1.6" y="51.80" width="1" height="0.8" fill="#ccc" opacity="0.7"/>
<rect x="5.05" y="14.69" width="2.3" height="12.71" fill="#4472c4" opacity="1"/>
<rect x="9.31" y="24.30" width="2.3" height="3.10" fill="#4472c4" opacity="1"/>
<rect x="13.57" y="22.13" width="2.3" height="5.27" fill="#4472c4" opacity="1"/>
<rect x="17.83" y="18.41" width="2.3" height="8.99" fill="#4472c4" opacity="1"/>
<rect x="22.09" y="15.62" width="2.3" height="11.78" fill="#4472c4" opacity="1"/>
<rect x="26.35" y="16.55" width="2.3" height="10.85" fill="#4472c4" opacity="1"/>
<rect x="30.61" y="18.41" width="2.3" height="8.99" fill="#4472c4" opacity="1"/>
<rect x="34.87" y="21.51" width="2.3" height="5.89" fill="#4472c4" opacity="1"/>
<rect x="39.13" y="27.40" width="2.3" height="0.31" fill="#4472c4" opacity="1"/>
<rect x="43.39" y="27.40" width="2.3" height="7.75" fill="#4472c4" opacity="1"/>
<rect x="47.65" y="19.34" width="2.3" height="8.06" fill="#4472c4" opacity="1"/>
<rect x="51.91" y="22.44" width="2.3" height="4.96" fill="#4472c4" opacity="1"/>
<rect x="56.17" y="20.58" width="2.3" height="6.82" fill="#4472c4" opacity="1"/>
<rect x="60.43" y="21.82" width="2.3" height="5.58" fill="#4472c4" opacity="1"/>
<rect x="64.69" y="19.65" width="2.3" height="7.75" fill="#4472c4" opacity="1"/>
<rect x="68.95" y="18.41" width="2.3" height="8.99" fill="#4472c4" opacity="1"/>
<rect x="73.21" y="22.44" width="2.3" height="4.96" fill="#4472c4" opacity="1"/>
<rect x="77.47" y="19.96" width="2.3" height="7.44" fill="#4472c4" opacity="1"/>
<rect x="81.73" y="18.41" width="2.3" height="8.99" fill="#4472c4" opacity="1"/>
<rect x="85.99" y="20.27" width="2.3" height="7.13" fill="#4472c4" opacity="1"/>
<rect x="90.25" y="27.40" width="2.3" height="18.29" fill="#4472c4" opacity="1"/>
<rect x="94.51" y="12.83" width="2.3" height="14.57" fill="#4472c4" opacity="1"/>
<line x1="4" y1="27.4" x2="98" y2="27.4" stroke="#cfcfcf" stroke-width="0.8"/>
<line x1="4.5" y1="29.599999999999998" x2="97.5" y2="29.599999999999998" stroke="#ccc" stroke-width="1" stroke-dasharray="3.2 1.06" opacity="0.75"/>
<text x="50" y="5.2" font-size="2.8" font-weight="bold" fill="#e8e8e8" text-anchor="middle" letter-spacing="0">Real GDP growth (Annual percent change)</text>
</svg>
<svg class="abs" style="left:565px;top:168px" width="100" height="56" viewBox="0 0 100 56" font-family="Liberation Sans, sans-serif">
<rect x="0.5" y="0.5" width="99" height="55" fill="#fff" stroke="#e6e6e6" stroke-width="1"/>
<line x1="3" y1="8.300" x2="97" y2="8.300" stroke="#888" stroke-width="0.600"/>
<line x1="4" y1="8.80" x2="98" y2="8.80" stroke="#e2e2e2" stroke-width="0.7"/>
<line x1="4" y1="15.00" x2="98" y2="15.00" stroke="#e2e2e2" stroke-width="0.7"/>
<line x1="4" y1="21.20" x2="98" y2="21.20" stroke="#e2e2e2" stroke-width="0.7"/>
<line x1="4" y1="33.60" x2="98" y2="33.60" stroke="#e2e2e2" stroke-width="0.7"/>
<line x1="4" y1="39.80" x2="98" y2="39.80" stroke="#e2e2e2" stroke-width="0.7"/>
<line x1="4" y1="46.00" x2="98" y2="46.00" stroke="#e2e2e2" stroke-width="0.7"/>
<line x1="4" y1="52.20" x2="98" y2="52.20" stroke="#e2e2e2" stroke-width="0.7"/>
<rect x="1.6" y="8.40" width="1" height="0.8" fill="#999" opacity="0.7"/>
<rect x="1.6" y="14.60" width="1" height="0.8" fill="#999" opacity="0.7"/>
<rect x="1.6" y="20.80" width="1" height="0.8" fill="#999" opacity="0.7"/>
<rect x="1.6" y="27.00" width="1" height="0.8" fill="#999" opacity="0.7"/>
<rect x="1.6" y="33.20" width="1" height="0.8" fill="#999" opacity="0.7"/>
<rect x="1.6" y="39.40" width="1" height="0.8" fill="#999" opacity="0.7"/>
<rect x="1.6" y="45.60" width="1" height="0.8" fill="#999" opacity="0.7"/>
<rect x="1.6" y="51.80" width="1" height="0.8" fill="#999" opacity="0.7"/>
<rect x="5.45" y="14.69" width="1.5" height="12.71" fill="#9db7e6" opacity="1"/>
<rect x="9.71" y="24.30" width="1.5" height="3.10" fill="#9db7e6" opacity="1"/>
<rect x="13.97" y="22.13" width="1.5" height="5.27" fill="#9db7e6" opacity="1"/>
<rect x="18.23" y="18.41" width="1.5" height="8.99" fill="#9db7e6" opacity="1"/>
<rect x="22.49" y="15.62" width="1.5" height="11.78" fill="#9db7e6" opacity="1"/>
<rect x="26.75" y="16.55" width="1.5" height="10.85" fill="#9db7e6" opacity="1"/>
<rect x="31.01" y="18.41" width="1.5" height="8.99" fill="#9db7e6" opacity="1"/>
<rect x="35.27" y="21.51" width="1.5" height="5.89" fill="#9db7e6" opacity="1"/>
<rect x="39.53" y="27.40" width="1.5" height="0.31" fill="#9db7e6" opacity="1"/>
<rect x="43.79" y="27.40" width="1.5" height="7.75" fill="#9db7e6" opacity="1"/>
<rect x="48.05" y="19.34" width="1.5" height="8.06" fill="#9db7e6" opacity="1"/>
<rect x="52.31" y="22.44" width="1.5" height="4.96" fill="#9db7e6" opacity="1"/>
<rect x="56.57" y="20.58" width="1.5" height="6.82" fill="#9db7e6" opacity="1"/>
<rect x="60.83" y="21.82" width="1.5" height="5.58" fill="#9db7e6" opacity="1"/>
<rect x="65.09" y="19.65" width="1.5" height="7.75" fill="#9db7e6" opacity="1"/>
<rect x="69.35" y="18.41" width="1.5" height="8.99" fill="#9db7e6" opacity="1"/>
<rect x="73.61" y="22.44" width="1.5" height="4.96" fill="#9db7e6" opacity="1"/>
<rect x="77.87" y="19.96" width="1.5" height="7.44" fill="#9db7e6" opacity="1"/>
<rect x="82.13" y="18.41" width="1.5" height="8.99" fill="#9db7e6" opacity="1"/>
<rect x="86.39" y="20.27" width="1.5" height="7.13" fill="#9db7e6" opacity="1"/>
<rect x="90.65" y="27.40" width="1.5" height="18.29" fill="#9db7e6" opacity="1"/>
<rect x="94.91" y="12.83" width="1.5" height="14.57" fill="#9db7e6" opacity="1"/>
<line x1="4" y1="27.4" x2="98" y2="27.4" stroke="#bbb" stroke-width="0.8"/>
<line x1="4.5" y1="29.599999999999998" x2="97.5" y2="29.599999999999998" stroke="#999" stroke-width="1" stroke-dasharray="3.2 1.06" opacity="0.75"/>
<text x="50" y="5.2" font-size="2.8" font-weight="bold" fill="#222" text-anchor="middle" letter-spacing="0">Real GDP growth (Annual percent change)</text>
</svg>
<svg class="abs" style="left:675px;top:168px" width="100" height="56" viewBox="0 0 100 56" font-family="Liberation Sans, sans-serif">
<rect x="0.5" y="0.5" width="99" height="55" fill="#fff" stroke="#e6e6e6" stroke-width="1"/>

<rect x="1.6" y="8.40" width="1" height="0.8" fill="#999" opacity="0.7"/>
<rect x="1.6" y="14.60" width="1" height="0.8" fill="#999" opacity="0.7"/>
<rect x="1.6" y="20.80" width="1" height="0.8" fill="#999" opacity="0.7"/>
<rect x="1.6" y="27.00" width="1" height="0.8" fill="#999" opacity="0.7"/>
<rect x="1.6" y="33.20" width="1" height="0.8" fill="#999" opacity="0.7"/>
<rect x="1.6" y="39.40" width="1" height="0.8" fill="#999" opacity="0.7"/>
<rect x="1.6" y="45.60" width="1" height="0.8" fill="#999" opacity="0.7"/>
<rect x="1.6" y="51.80" width="1" height="0.8" fill="#999" opacity="0.7"/>
<rect x="4.40" y="14.69" width="3.6" height="12.71" fill="#5580cf" opacity="1"/>
<rect x="8.66" y="24.30" width="3.6" height="3.10" fill="#5580cf" opacity="1"/>
<rect x="12.92" y="22.13" width="3.6" height="5.27" fill="#5580cf" opacity="1"/>
<rect x="17.18" y="18.41" width="3.6" height="8.99" fill="#5580cf" opacity="1"/>
<rect x="21.44" y="15.62" width="3.6" height="11.78" fill="#5580cf" opacity="1"/>
<rect x="25.70" y="16.55" width="3.6" height="10.85" fill="#5580cf" opacity="1"/>
<rect x="29.96" y="18.41" width="3.6" height="8.99" fill="#5580cf" opacity="1"/>
<rect x="34.22" y="21.51" width="3.6" height="5.89" fill="#5580cf" opacity="1"/>
<rect x="38.48" y="27.40" width="3.6" height="0.31" fill="#5580cf" opacity="1"/>
<rect x="42.74" y="27.40" width="3.6" height="7.75" fill="#5580cf" opacity="1"/>
<rect x="47.00" y="19.34" width="3.6" height="8.06" fill="#5580cf" opacity="1"/>
<rect x="51.26" y="22.44" width="3.6" height="4.96" fill="#5580cf" opacity="1"/>
<rect x="55.52" y="20.58" width="3.6" height="6.82" fill="#5580cf" opacity="1"/>
<rect x="59.78" y="21.82" width="3.6" height="5.58" fill="#5580cf" opacity="1"/>
<rect x="64.04" y="19.65" width="3.6" height="7.75" fill="#5580cf" opacity="1"/>
<rect x="68.30" y="18.41" width="3.6" height="8.99" fill="#5580cf" opacity="1"/>
<rect x="72.56" y="22.44" width="3.6" height="4.96" fill="#5580cf" opacity="1"/>
<rect x="76.82" y="19.96" width="3.6" height="7.44" fill="#5580cf" opacity="1"/>
<rect x="81.08" y="18.41" width="3.6" height="8.99" fill="#5580cf" opacity="1"/>
<rect x="85.34" y="20.27" width="3.6" height="7.13" fill="#5580cf" opacity="1"/>
<rect x="89.60" y="27.40" width="3.6" height="18.29" fill="#5580cf" opacity="1"/>
<rect x="93.86" y="12.83" width="3.6" height="14.57" fill="#5580cf" opacity="1"/>
<line x1="4" y1="27.4" x2="98" y2="27.4" stroke="#bbb" stroke-width="0.8"/>
<line x1="4.5" y1="29.599999999999998" x2="97.5" y2="29.599999999999998" stroke="#999" stroke-width="1" stroke-dasharray="3.2 1.06" opacity="0.75"/>
<text x="50" y="5.2" font-size="2.6" font-weight="normal" fill="#777" text-anchor="middle" letter-spacing="0">Real GDP growth (Annual percent change)</text>
</svg>
<svg class="abs" style="left:785px;top:168px" width="100" height="56" viewBox="0 0 100 56" font-family="Liberation Sans, sans-serif">
<rect x="0.5" y="0.5" width="99" height="55" fill="#fff" stroke="#e6e6e6" stroke-width="1"/>
<rect x="4" y="8.80" width="94" height="6.200" fill="#f1f1f1"/><rect x="4" y="21.20" width="94" height="6.200" fill="#f1f1f1"/><rect x="4" y="33.60" width="94" height="6.200" fill="#f1f1f1"/><rect x="4" y="46.00" width="94" height="6.200" fill="#f1f1f1"/>
<rect x="1.6" y="8.40" width="1" height="0.8" fill="#999" opacity="0.7"/>
<rect x="1.6" y="14.60" width="1" height="0.8" fill="#999" opacity="0.7"/>
<rect x="1.6" y="20.80" width="1" height="0.8" fill="#999" opacity="0.7"/>
<rect x="1.6" y="27.00" width="1" height="0.8" fill="#999" opacity="0.7"/>
<rect x="1.6" y="33.20" width="1" height="0.8" fill="#999" opacity="0.7"/>
<rect x="1.6" y="39.40" width="1" height="0.8" fill="#999" opacity="0.7"/>
<rect x="1.6" y="45.60" width="1" height="0.8" fill="#999" opacity="0.7"/>
<rect x="1.6" y="51.80" width="1" height="0.8" fill="#999" opacity="0.7"/>
<rect x="5.35" y="14.69" width="1.7" height="12.71" fill="#5580cf" opacity="1"/>
<rect x="9.61" y="24.30" width="1.7" height="3.10" fill="#5580cf" opacity="1"/>
<rect x="13.87" y="22.13" width="1.7" height="5.27" fill="#5580cf" opacity="1"/>
<rect x="18.13" y="18.41" width="1.7" height="8.99" fill="#5580cf" opacity="1"/>
<rect x="22.39" y="15.62" width="1.7" height="11.78" fill="#5580cf" opacity="1"/>
<rect x="26.65" y="16.55" width="1.7" height="10.85" fill="#5580cf" opacity="1"/>
<rect x="30.91" y="18.41" width="1.7" height="8.99" fill="#5580cf" opacity="1"/>
<rect x="35.17" y="21.51" width="1.7" height="5.89" fill="#5580cf" opacity="1"/>
<rect x="39.43" y="27.40" width="1.7" height="0.31" fill="#5580cf" opacity="1"/>
<rect x="43.69" y="27.40" width="1.7" height="7.75" fill="#5580cf" opacity="1"/>
<rect x="47.95" y="19.34" width="1.7" height="8.06" fill="#5580cf" opacity="1"/>
<rect x="52.21" y="22.44" width="1.7" height="4.96" fill="#5580cf" opacity="1"/>
<rect x="56.47" y="20.58" width="1.7" height="6.82" fill="#5580cf" opacity="1"/>
<rect x="60.73" y="21.82" width="1.7" height="5.58" fill="#5580cf" opacity="1"/>
<rect x="64.99" y="19.65" width="1.7" height="7.75" fill="#5580cf" opacity="1"/>
<rect x="69.25" y="18.41" width="1.7" height="8.99" fill="#5580cf" opacity="1"/>
<rect x="73.51" y="22.44" width="1.7" height="4.96" fill="#5580cf" opacity="1"/>
<rect x="77.77" y="19.96" width="1.7" height="7.44" fill="#5580cf" opacity="1"/>
<rect x="82.03" y="18.41" width="1.7" height="8.99" fill="#5580cf" opacity="1"/>
<rect x="86.29" y="20.27" width="1.7" height="7.13" fill="#5580cf" opacity="1"/>
<rect x="90.55" y="27.40" width="1.7" height="18.29" fill="#5580cf" opacity="1"/>
<rect x="94.81" y="12.83" width="1.7" height="14.57" fill="#5580cf" opacity="1"/>
<line x1="4" y1="27.4" x2="98" y2="27.4" stroke="#bbb" stroke-width="0.8"/>
<line x1="4.5" y1="29.599999999999998" x2="97.5" y2="29.599999999999998" stroke="#999" stroke-width="1" stroke-dasharray="3.2 1.06" opacity="0.75"/>
<text x="50" y="5.2" font-size="2.6" font-weight="normal" fill="#777" text-anchor="middle" letter-spacing="0">Real GDP growth (Annual percent change)</text>
</svg>
<svg class="abs" style="left:235px;top:238px" width="100" height="56" viewBox="0 0 100 56" font-family="Liberation Sans, sans-serif">
<rect x="0.5" y="0.5" width="99" height="55" fill="#404040" stroke="#404040" stroke-width="1"/>
<line x1="4.10" y1="8" x2="4.10" y2="53" stroke="#4e4e4e" stroke-width="0.600"/><line x1="8.36" y1="8" x2="8.36" y2="53" stroke="#4e4e4e" stroke-width="0.600"/><line x1="12.62" y1="8" x2="12.62" y2="53" stroke="#4e4e4e" stroke-width="0.600"/><line x1="16.88" y1="8" x2="16.88" y2="53" stroke="#4e4e4e" stroke-width="0.600"/><line x1="21.14" y1="8" x2="21.14" y2="53" stroke="#4e4e4e" stroke-width="0.600"/><line x1="25.40" y1="8" x2="25.40" y2="53" stroke="#4e4e4e" stroke-width="0.600"/><line x1="29.66" y1="8" x2="29.66" y2="53" stroke="#4e4e4e" stroke-width="0.600"/><line x1="33.92" y1="8" x2="33.92" y2="53" stroke="#4e4e4e" stroke-width="0.600"/><line x1="38.18" y1="8" x2="38.18" y2="53" stroke="#4e4e4e" stroke-width="0.600"/><line x1="42.44" y1="8" x2="42.44" y2="53" stroke="#4e4e4e" stroke-width="0.600"/><line x1="46.70" y1="8" x2="46.70" y2="53" stroke="#4e4e4e" stroke-width="0.600"/><line x1="50.96" y1="8" x2="50.96" y2="53" stroke="#4e4e4e" stroke-width="0.600"/><line x1="55.22" y1="8" x2="55.22" y2="53" stroke="#4e4e4e" stroke-width="0.600"/><line x1="59.48" y1="8" x2="59.48" y2="53" stroke="#4e4e4e" stroke-width="0.600"/><line x1="63.74" y1="8" x2="63.74" y2="53" stroke="#4e4e4e" stroke-width="0.600"/><line x1="68.00" y1="8" x2="68.00" y2="53" stroke="#4e4e4e" stroke-width="0.600"/><line x1="72.26" y1="8" x2="72.26" y2="53" stroke="#4e4e4e" stroke-width="0.600"/><line x1="76.52" y1="8" x2="76.52" y2="53" stroke="#4e4e4e" stroke-width="0.600"/><line x1="80.78" y1="8" x2="80.78" y2="53" stroke="#4e4e4e" stroke-width="0.600"/><line x1="85.04" y1="8" x2="85.04" y2="53" stroke="#4e4e4e" stroke-width="0.600"/><line x1="89.30" y1="8" x2="89.30" y2="53" stroke="#4e4e4e" stroke-width="0.600"/><line x1="93.56" y1="8" x2="93.56" y2="53" stroke="#4e4e4e" stroke-width="0.600"/><line x1="97.82" y1="8" x2="97.82" y2="53" stroke="#4e4e4e" stroke-width="0.600"/>
<line x1="4" y1="9.50" x2="98" y2="9.50" stroke="#4e4e4e" stroke-width="0.7"/>
<line x1="4" y1="15.50" x2="98" y2="15.50" stroke="#4e4e4e" stroke-width="0.7"/>
<line x1="4" y1="21.50" x2="98" y2="21.50" stroke="#4e4e4e" stroke-width="0.7"/>
<line x1="4" y1="33.50" x2="98" y2="33.50" stroke="#4e4e4e" stroke-width="0.7"/>
<line x1="4" y1="39.50" x2="98" y2="39.50" stroke="#4e4e4e" stroke-width="0.7"/>
<line x1="4" y1="45.50" x2="98" y2="45.50" stroke="#4e4e4e" stroke-width="0.7"/>
<line x1="4" y1="51.50" x2="98" y2="51.50" stroke="#4e4e4e" stroke-width="0.7"/>
<rect x="1.6" y="9.10" width="1" height="0.8" fill="#8a8a8a" opacity="0.7"/>
<rect x="1.6" y="15.10" width="1" height="0.8" fill="#8a8a8a" opacity="0.7"/>
<rect x="1.6" y="21.10" width="1" height="0.8" fill="#8a8a8a" opacity="0.7"/>
<rect x="1.6" y="27.10" width="1" height="0.8" fill="#8a8a8a" opacity="0.7"/>
<rect x="1.6" y="33.10" width="1" height="0.8" fill="#8a8a8a" opacity="0.7"/>
<rect x="1.6" y="39.10" width="1" height="0.8" fill="#8a8a8a" opacity="0.7"/>
<rect x="1.6" y="45.10" width="1" height="0.8" fill="#8a8a8a" opacity="0.7"/>
<rect x="1.6" y="51.10" width="1" height="0.8" fill="#8a8a8a" opacity="0.7"/>
<rect x="5.00" y="15.20" width="2.4" height="12.30" fill="#4472c4" opacity="1"/>
<rect x="9.26" y="24.50" width="2.4" height="3.00" fill="#4472c4" opacity="1"/>
<rect x="13.52" y="22.40" width="2.4" height="5.10" fill="#4472c4" opacity="1"/>
<rect x="17.78" y="18.80" width="2.4" height="8.70" fill="#4472c4" opacity="1"/>
<rect x="22.04" y="16.10" width="2.4" height="11.40" fill="#4472c4" opacity="1"/>
<rect x="26.30" y="17.00" width="2.4" height="10.50" fill="#4472c4" opacity="1"/>
<rect x="30.56" y="18.80" width="2.4" height="8.70" fill="#4472c4" opacity="1"/>
<rect x="34.82" y="21.80" width="2.4" height="5.70" fill="#4472c4" opacity="1"/>
<rect x="39.08" y="27.50" width="2.4" height="0.30" fill="#4472c4" opacity="1"/>
<rect x="43.34" y="27.50" width="2.4" height="7.50" fill="#4472c4" opacity="1"/>
<rect x="47.60" y="19.70" width="2.4" height="7.80" fill="#4472c4" opacity="1"/>
<rect x="51.86" y="22.70" width="2.4" height="4.80" fill="#4472c4" opacity="1"/>
<rect x="56.12" y="20.90" width="2.4" height="6.60" fill="#4472c4" opacity="1"/>
<rect x="60.38" y="22.10" width="2.4" height="5.40" fill="#4472c4" opacity="1"/>
<rect x="64.64" y="20.00" width="2.4" height="7.50" fill="#4472c4" opacity="1"/>
<rect x="68.90" y="18.80" width="2.4" height="8.70" fill="#4472c4" opacity="1"/>
<rect x="73.16" y="22.70" width="2.4" height="4.80" fill="#4472c4" opacity="1"/>
<rect x="77.42" y="20.30" width="2.4" height="7.20" fill="#4472c4" opacity="1"/>
<rect x="81.68" y="18.80" width="2.4" height="8.70" fill="#4472c4" opacity="1"/>
<rect x="85.94" y="20.60" width="2.4" height="6.90" fill="#4472c4" opacity="1"/>
<rect x="90.20" y="27.50" width="2.4" height="17.70" fill="#4472c4" opacity="1"/>
<rect x="94.46" y="13.40" width="2.4" height="14.10" fill="#4472c4" opacity="1"/>
<line x1="4" y1="27.5" x2="98" y2="27.5" stroke="#707070" stroke-width="0.8"/>
<line x1="4.5" y1="29.7" x2="97.5" y2="29.7" stroke="#8a8a8a" stroke-width="1" stroke-dasharray="3.2 1.06" opacity="0.75"/>
<text x="50" y="4.2" font-size="2.6" font-weight="normal" fill="#ddd" text-anchor="middle" letter-spacing="0">Real GDP growth (Annual percent change)</text>
</svg>
<svg class="abs" style="left:345px;top:238px" width="100" height="56" viewBox="0 0 100 56" font-family="Liberation Sans, sans-serif">
<rect x="0.5" y="0.5" width="99" height="55" fill="#4472c4" stroke="#4472c4" stroke-width="1"/>
<line x1="4.10" y1="8" x2="4.10" y2="54" stroke="#5e86d0" stroke-width="0.900"/><line x1="8.36" y1="8" x2="8.36" y2="54" stroke="#5e86d0" stroke-width="0.900"/><line x1="12.62" y1="8" x2="12.62" y2="54" stroke="#5e86d0" stroke-width="0.900"/><line x1="16.88" y1="8" x2="16.88" y2="54" stroke="#5e86d0" stroke-width="0.900"/><line x1="21.14" y1="8" x2="21.14" y2="54" stroke="#5e86d0" stroke-width="0.900"/><line x1="25.40" y1="8" x2="25.40" y2="54" stroke="#5e86d0" stroke-width="0.900"/><line x1="29.66" y1="8" x2="29.66" y2="54" stroke="#5e86d0" stroke-width="0.900"/><line x1="33.92" y1="8" x2="33.92" y2="54" stroke="#5e86d0" stroke-width="0.900"/><line x1="38.18" y1="8" x2="38.18" y2="54" stroke="#5e86d0" stroke-width="0.900"/><line x1="42.44" y1="8" x2="42.44" y2="54" stroke="#5e86d0" stroke-width="0.900"/><line x1="46.70" y1="8" x2="46.70" y2="54" stroke="#5e86d0" stroke-width="0.900"/><line x1="50.96" y1="8" x2="50.96" y2="54" stroke="#5e86d0" stroke-width="0.900"/><line x1="55.22" y1="8" x2="55.22" y2="54" stroke="#5e86d0" stroke-width="0.900"/><line x1="59.48" y1="8" x2="59.48" y2="54" stroke="#5e86d0" stroke-width="0.900"/><line x1="63.74" y1="8" x2="63.74" y2="54" stroke="#5e86d0" stroke-width="0.900"/><line x1="68.00" y1="8" x2="68.00" y2="54" stroke="#5e86d0" stroke-width="0.900"/><line x1="72.26" y1="8" x2="72.26" y2="54" stroke="#5e86d0" stroke-width="0.900"/><line x1="76.52" y1="8" x2="76.52" y2="54" stroke="#5e86d0" stroke-width="0.900"/><line x1="80.78" y1="8" x2="80.78" y2="54" stroke="#5e86d0" stroke-width="0.900"/><line x1="85.04" y1="8" x2="85.04" y2="54" stroke="#5e86d0" stroke-width="0.900"/><line x1="89.30" y1="8" x2="89.30" y2="54" stroke="#5e86d0" stroke-width="0.900"/><line x1="93.56" y1="8" x2="93.56" y2="54" stroke="#5e86d0" stroke-width="0.900"/><line x1="97.82" y1="8" x2="97.82" y2="54" stroke="#5e86d0" stroke-width="0.900"/>
<rect x="1.6" y="14.40" width="1" height="0.8" fill="#fff" opacity="0.7"/>
<rect x="1.6" y="17.80" width="1" height="0.8" fill="#fff" opacity="0.7"/>
<rect x="1.6" y="21.20" width="1" height="0.8" fill="#fff" opacity="0.7"/>
<rect x="1.6" y="24.60" width="1" height="0.8" fill="#fff" opacity="0.7"/>
<rect x="1.6" y="28.00" width="1" height="0.8" fill="#fff" opacity="0.7"/>
<rect x="1.6" y="31.40" width="1" height="0.8" fill="#fff" opacity="0.7"/>
<rect x="1.6" y="34.80" width="1" height="0.8" fill="#fff" opacity="0.7"/>
<rect x="1.6" y="38.20" width="1" height="0.8" fill="#fff" opacity="0.7"/>
<rect x="5.40" y="18.03" width="1.6" height="6.97" fill="#a9c1ec" opacity="1"/>
<rect x="5.20" y="16.43" width="2" height="1" fill="#fff" opacity="0.6"/>
<rect x="9.66" y="23.30" width="1.6" height="1.70" fill="#a9c1ec" opacity="1"/>
<rect x="9.46" y="21.70" width="2" height="1" fill="#fff" opacity="0.6"/>
<rect x="13.92" y="22.11" width="1.6" height="2.89" fill="#a9c1ec" opacity="1"/>
<rect x="13.72" y="20.51" width="2" height="1" fill="#fff" opacity="0.6"/>
<rect x="18.18" y="20.07" width="1.6" height="4.93" fill="#a9c1ec" opacity="1"/>
<rect x="17.98" y="18.47" width="2" height="1" fill="#fff" opacity="0.6"/>
<rect x="22.44" y="18.54" width="1.6" height="6.46" fill="#a9c1ec" opacity="1"/>
<rect x="22.24" y="16.94" width="2" height="1" fill="#fff" opacity="0.6"/>
<rect x="26.70" y="19.05" width="1.6" height="5.95" fill="#a9c1ec" opacity="1"/>
<rect x="26.50" y="17.45" width="2" height="1" fill="#fff" opacity="0.6"/>
<rect x="30.96" y="20.07" width="1.6" height="4.93" fill="#a9c1ec" opacity="1"/>
<rect x="30.76" y="18.47" width="2" height="1" fill="#fff" opacity="0.6"/>
<rect x="35.22" y="21.77" width="1.6" height="3.23" fill="#a9c1ec" opacity="1"/>
<rect x="35.02" y="20.17" width="2" height="1" fill="#fff" opacity="0.6"/>
<rect x="39.48" y="25.00" width="1.6" height="0.17" fill="#a9c1ec" opacity="1"/>
<rect x="39.28" y="25.77" width="2" height="1" fill="#fff" opacity="0.6"/>
<rect x="43.74" y="25.00" width="1.6" height="4.25" fill="#a9c1ec" opacity="1"/>
<rect x="43.54" y="29.85" width="2" height="1" fill="#fff" opacity="0.6"/>
<rect x="48.00" y="20.58" width="1.6" height="4.42" fill="#a9c1ec" opacity="1"/>
<rect x="47.80" y="18.98" width="2" height="1" fill="#fff" opacity="0.6"/>
<rect x="52.26" y="22.28" width="1.6" height="2.72" fill="#a9c1ec" opacity="1"/>
<rect x="52.06" y="20.68" width="2" height="1" fill="#fff" opacity="0.6"/>
<rect x="56.52" y="21.26" width="1.6" height="3.74" fill="#a9c1ec" opacity="1"/>
<rect x="56.32" y="19.66" width="2" height="1" fill="#fff" opacity="0.6"/>
<rect x="60.78" y="21.94" width="1.6" height="3.06" fill="#a9c1ec" opacity="1"/>
<rect x="60.58" y="20.34" width="2" height="1" fill="#fff" opacity="0.6"/>
<rect x="65.04" y="20.75" width="1.6" height="4.25" fill="#a9c1ec" opacity="1"/>
<rect x="64.84" y="19.15" width="2" height="1" fill="#fff" opacity="0.6"/>
<rect x="69.30" y="20.07" width="1.6" height="4.93" fill="#a9c1ec" opacity="1"/>
<rect x="69.10" y="18.47" width="2" height="1" fill="#fff" opacity="0.6"/>
<rect x="73.56" y="22.28" width="1.6" height="2.72" fill="#a9c1ec" opacity="1"/>
<rect x="73.36" y="20.68" width="2" height="1" fill="#fff" opacity="0.6"/>
<rect x="77.82" y="20.92" width="1.6" height="4.08" fill="#a9c1ec" opacity="1"/>
<rect x="77.62" y="19.32" width="2" height="1" fill="#fff" opacity="0.6"/>
<rect x="82.08" y="20.07" width="1.6" height="4.93" fill="#a9c1ec" opacity="1"/>
<rect x="81.88" y="18.47" width="2" height="1" fill="#fff" opacity="0.6"/>
<rect x="86.34" y="21.09" width="1.6" height="3.91" fill="#a9c1ec" opacity="1"/>
<rect x="86.14" y="19.49" width="2" height="1" fill="#fff" opacity="0.6"/>
<rect x="90.60" y="25.00" width="1.6" height="10.03" fill="#a9c1ec" opacity="1"/>
<rect x="90.40" y="35.63" width="2" height="1" fill="#fff" opacity="0.6"/>
<rect x="94.86" y="17.01" width="1.6" height="7.99" fill="#a9c1ec" opacity="1"/>
<rect x="94.66" y="15.41" width="2" height="1" fill="#fff" opacity="0.6"/>
<line x1="4" y1="25" x2="98" y2="25" stroke="#d0dcf4" stroke-width="0.8"/>
<line x1="4.5" y1="27.2" x2="97.5" y2="27.2" stroke="#fff" stroke-width="1" stroke-dasharray="3.2 1.06" opacity="0.75"/>
<text x="50" y="4.4" font-size="2.8" font-weight="bold" fill="#fff" text-anchor="middle" letter-spacing="0">Real GDP growth (Annual percent change)</text>
</svg>
<svg class="abs" style="left:455px;top:238px" width="100" height="56" viewBox="0 0 100 56" font-family="Liberation Sans, sans-serif">
<rect x="0.5" y="0.5" width="99" height="55" fill="#fff" stroke="#e6e6e6" stroke-width="1"/>

<line x1="4" y1="10.50" x2="98" y2="10.50" stroke="#e6e6e6" stroke-width="0.7"/>
<line x1="4" y1="16.50" x2="98" y2="16.50" stroke="#e6e6e6" stroke-width="0.7"/>
<line x1="4" y1="22.50" x2="98" y2="22.50" stroke="#e6e6e6" stroke-width="0.7"/>
<line x1="4" y1="34.50" x2="98" y2="34.50" stroke="#e6e6e6" stroke-width="0.7"/>
<line x1="4" y1="40.50" x2="98" y2="40.50" stroke="#e6e6e6" stroke-width="0.7"/>
<line x1="4" y1="46.50" x2="98" y2="46.50" stroke="#e6e6e6" stroke-width="0.7"/>
<line x1="4" y1="52.50" x2="98" y2="52.50" stroke="#e6e6e6" stroke-width="0.7"/>
<rect x="1.6" y="10.10" width="1" height="0.8" fill="#999" opacity="0.7"/>
<rect x="1.6" y="16.10" width="1" height="0.8" fill="#999" opacity="0.7"/>
<rect x="1.6" y="22.10" width="1" height="0.8" fill="#999" opacity="0.7"/>
<rect x="1.6" y="28.10" width="1" height="0.8" fill="#999" opacity="0.7"/>
<rect x="1.6" y="34.10" width="1" height="0.8" fill="#999" opacity="0.7"/>
<rect x="1.6" y="40.10" width="1" height="0.8" fill="#999" opacity="0.7"/>
<rect x="1.6" y="46.10" width="1" height="0.8" fill="#999" opacity="0.7"/>
<rect x="1.6" y="52.10" width="1" height="0.8" fill="#999" opacity="0.7"/>
<rect x="5.20" y="16.20" width="2" height="12.30" fill="#7296d8" opacity="1"/>
<rect x="9.46" y="25.50" width="2" height="3.00" fill="#7296d8" opacity="1"/>
<rect x="13.72" y="23.40" width="2" height="5.10" fill="#7296d8" opacity="1"/>
<rect x="17.98" y="19.80" width="2" height="8.70" fill="#7296d8" opacity="1"/>
<rect x="22.24" y="17.10" width="2" height="11.40" fill="#7296d8" opacity="1"/>
<rect x="26.50" y="18.00" width="2" height="10.50" fill="#7296d8" opacity="1"/>
<rect x="30.76" y="19.80" width="2" height="8.70" fill="#7296d8" opacity="1"/>
<rect x="35.02" y="22.80" width="2" height="5.70" fill="#7296d8" opacity="1"/>
<rect x="39.28" y="28.50" width="2" height="0.30" fill="#7296d8" opacity="1"/>
<rect x="43.54" y="28.50" width="2" height="7.50" fill="#7296d8" opacity="1"/>
<rect x="47.80" y="20.70" width="2" height="7.80" fill="#7296d8" opacity="1"/>
<rect x="52.06" y="23.70" width="2" height="4.80" fill="#7296d8" opacity="1"/>
<rect x="56.32" y="21.90" width="2" height="6.60" fill="#7296d8" opacity="1"/>
<rect x="60.58" y="23.10" width="2" height="5.40" fill="#7296d8" opacity="1"/>
<rect x="64.84" y="21.00" width="2" height="7.50" fill="#7296d8" opacity="1"/>
<rect x="69.10" y="19.80" width="2" height="8.70" fill="#7296d8" opacity="1"/>
<rect x="73.36" y="23.70" width="2" height="4.80" fill="#7296d8" opacity="1"/>
<rect x="77.62" y="21.30" width="2" height="7.20" fill="#7296d8" opacity="1"/>
<rect x="81.88" y="19.80" width="2" height="8.70" fill="#7296d8" opacity="1"/>
<rect x="86.14" y="21.60" width="2" height="6.90" fill="#7296d8" opacity="1"/>
<rect x="90.40" y="28.50" width="2" height="17.70" fill="#7296d8" opacity="1"/>
<rect x="94.66" y="14.40" width="2" height="14.10" fill="#7296d8" opacity="1"/>
<line x1="4" y1="28.5" x2="98" y2="28.5" stroke="#bbb" stroke-width="0.8"/>
<line x1="4.5" y1="30.7" x2="97.5" y2="30.7" stroke="#999" stroke-width="1" stroke-dasharray="3.2 1.06" opacity="0.75"/>
<text x="50" y="5.2" font-size="2.6" font-weight="normal" fill="#888" text-anchor="middle" letter-spacing="0">Real GDP growth (Annual percent change)</text>
</svg>
<svg class="abs" style="left:565px;top:238px" width="100" height="56" viewBox="0 0 100 56" font-family="Liberation Sans, sans-serif">
<rect x="0.5" y="0.5" width="99" height="55" fill="#fff" stroke="#e6e6e6" stroke-width="1"/>

<line x1="4" y1="8.50" x2="98" y2="8.50" stroke="#dcdcdc" stroke-width="0.7"/>
<line x1="4" y1="14.50" x2="98" y2="14.50" stroke="#dcdcdc" stroke-width="0.7"/>
<line x1="4" y1="20.50" x2="98" y2="20.50" stroke="#dcdcdc" stroke-width="0.7"/>
<line x1="4" y1="32.50" x2="98" y2="32.50" stroke="#dcdcdc" stroke-width="0.7"/>
<line x1="4" y1="38.50" x2="98" y2="38.50" stroke="#dcdcdc" stroke-width="0.7"/>
<line x1="4" y1="44.50" x2="98" y2="44.50" stroke="#dcdcdc" stroke-width="0.7"/>
<line x1="4" y1="50.50" x2="98" y2="50.50" stroke="#dcdcdc" stroke-width="0.7"/>
<rect x="1.6" y="8.10" width="1" height="0.8" fill="#999" opacity="0.7"/>
<rect x="1.6" y="14.10" width="1" height="0.8" fill="#999" opacity="0.7"/>
<rect x="1.6" y="20.10" width="1" height="0.8" fill="#999" opacity="0.7"/>
<rect x="1.6" y="26.10" width="1" height="0.8" fill="#999" opacity="0.7"/>
<rect x="1.6" y="32.10" width="1" height="0.8" fill="#999" opacity="0.7"/>
<rect x="1.6" y="38.10" width="1" height="0.8" fill="#999" opacity="0.7"/>
<rect x="1.6" y="44.10" width="1" height="0.8" fill="#999" opacity="0.7"/>
<rect x="1.6" y="50.10" width="1" height="0.8" fill="#999" opacity="0.7"/>
<rect x="4.90" y="14.20" width="2.6" height="12.30" fill="#3f6cc0" opacity="1"/>
<rect x="9.16" y="23.50" width="2.6" height="3.00" fill="#3f6cc0" opacity="1"/>
<rect x="13.42" y="21.40" width="2.6" height="5.10" fill="#3f6cc0" opacity="1"/>
<rect x="17.68" y="17.80" width="2.6" height="8.70" fill="#3f6cc0" opacity="1"/>
<rect x="21.94" y="15.10" width="2.6" height="11.40" fill="#3f6cc0" opacity="1"/>
<rect x="26.20" y="16.00" width="2.6" height="10.50" fill="#3f6cc0" opacity="1"/>
<rect x="30.46" y="17.80" width="2.6" height="8.70" fill="#3f6cc0" opacity="1"/>
<rect x="34.72" y="20.80" width="2.6" height="5.70" fill="#3f6cc0" opacity="1"/>
<rect x="38.98" y="26.50" width="2.6" height="0.30" fill="#3f6cc0" opacity="1"/>
<rect x="43.24" y="26.50" width="2.6" height="7.50" fill="#3f6cc0" opacity="1"/>
<rect x="47.50" y="18.70" width="2.6" height="7.80" fill="#3f6cc0" opacity="1"/>
<rect x="51.76" y="21.70" width="2.6" height="4.80" fill="#3f6cc0" opacity="1"/>
<rect x="56.02" y="19.90" width="2.6" height="6.60" fill="#3f6cc0" opacity="1"/>
<rect x="60.28" y="21.10" width="2.6" height="5.40" fill="#3f6cc0" opacity="1"/>
<rect x="64.54" y="19.00" width="2.6" height="7.50" fill="#3f6cc0" opacity="1"/>
<rect x="68.80" y="17.80" width="2.6" height="8.70" fill="#3f6cc0" opacity="1"/>
<rect x="73.06" y="21.70" width="2.6" height="4.80" fill="#3f6cc0" opacity="1"/>
<rect x="77.32" y="19.30" width="2.6" height="7.20" fill="#3f6cc0" opacity="1"/>
<rect x="81.58" y="17.80" width="2.6" height="8.70" fill="#3f6cc0" opacity="1"/>
<rect x="85.84" y="19.60" width="2.6" height="6.90" fill="#3f6cc0" opacity="1"/>
<rect x="90.10" y="26.50" width="2.6" height="17.70" fill="#3f6cc0" opacity="1"/>
<rect x="94.36" y="12.40" width="2.6" height="14.10" fill="#3f6cc0" opacity="1"/>
<line x1="4" y1="26.5" x2="98" y2="26.5" stroke="#bbb" stroke-width="0.8"/>
<line x1="4.5" y1="28.7" x2="97.5" y2="28.7" stroke="#999" stroke-width="1" stroke-dasharray="3.2 1.06" opacity="0.75"/>
<text x="50" y="5.2" font-size="2.8" font-weight="bold" fill="#444" text-anchor="middle" letter-spacing="0">Real GDP growth (Annual percent change)</text>
</svg>
<div class="abs" style="left:905px;top:313px;width:2px;height:2px;background:#8a8a8a;box-shadow:-4px 4px #8a8a8a,1px 4px #8a8a8a"></div>
<div class="abs" style="left:0;top:0;width:1px;height:1078px;background:#217346"></div>
<div class="abs" style="left:1329px;top:44px;width:1px;height:1034px;background:#217346"></div>
</body></html>
